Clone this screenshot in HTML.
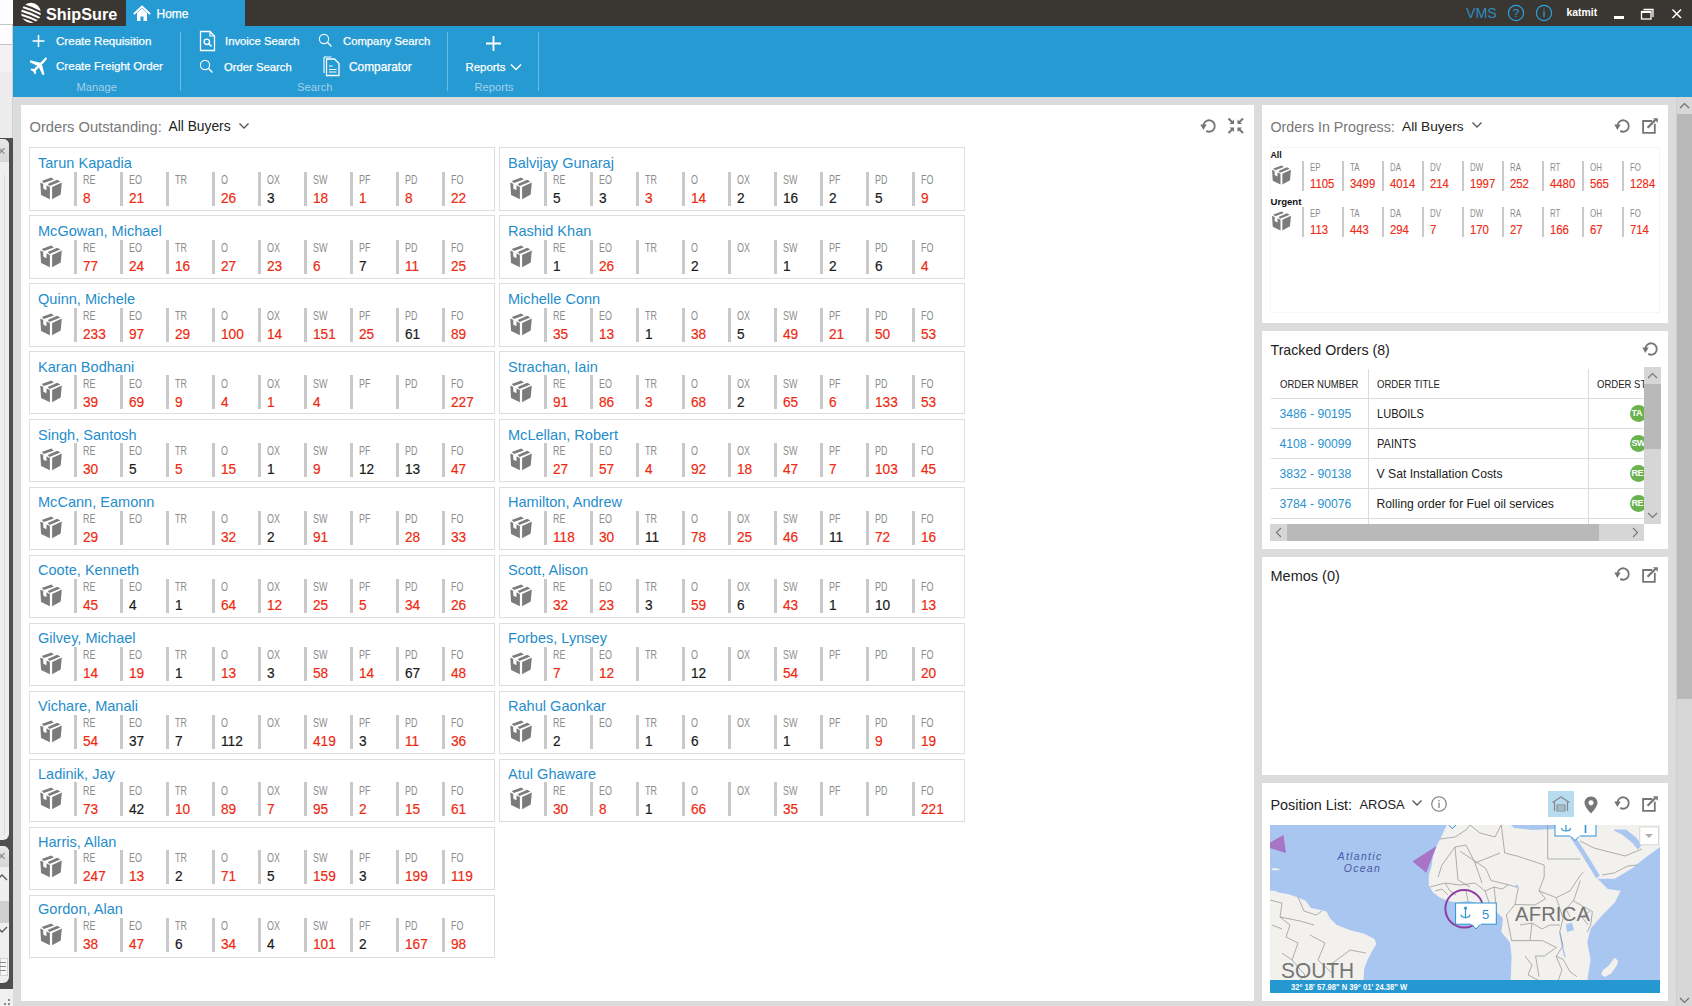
<!DOCTYPE html>
<html><head><meta charset="utf-8"><title>ShipSure</title>
<style>
html,body{margin:0;padding:0}
body{width:1692px;height:1006px;position:relative;overflow:hidden;background:#dcdcdc;font-family:"Liberation Sans", sans-serif}
.t{position:absolute;white-space:nowrap;line-height:1;transform-origin:0 0}
.r{position:absolute;display:block}
</style></head><body>
<div class="r" style="left:0px;top:0px;width:13px;height:1006px;background:#f0f0f0;"></div><div class="r" style="left:0px;top:0px;width:13px;height:24px;background:#fdfdfd;"></div><div class="r" style="left:0px;top:24px;width:13px;height:1px;background:#c4c4c4;"></div><div class="r" style="left:0px;top:25px;width:13px;height:19px;background:#fdfdfd;"></div><div class="r" style="left:0px;top:44px;width:13px;height:1px;background:#c4c4c4;"></div><div class="r" style="left:0px;top:45px;width:13px;height:27px;background:#f2f2f2;"></div><div class="r" style="left:0px;top:72px;width:13px;height:66px;background:#ececec;"></div><div class="r" style="left:12px;top:25px;width:1px;height:113px;background:#d0d0d0;"></div><div class="r" style="left:0px;top:138px;width:13px;height:851px;background:#4f4f4f;"></div><div class="r" style="left:0px;top:139px;width:9px;height:701px;background:#efefef;border-top-right-radius:6px;border-bottom-right-radius:6px"></div><div class="r" style="left:0px;top:139px;width:9px;height:23px;background:linear-gradient(#e9e9e9,#d6d6d6);border-top-right-radius:6px"></div><div class="t" style="left:-3px;top:146px;font-size:11px;color:#8a8a8a;line-height:11px">&#x2715;</div><div class="r" style="left:4px;top:175px;width:1px;height:660px;background:#d9d9d9;"></div><div class="r" style="left:0px;top:846px;width:9px;height:137px;background:#efefef;border-top-right-radius:6px;border-bottom-right-radius:6px"></div><div class="r" style="left:0px;top:846px;width:9px;height:21px;background:linear-gradient(#e9e9e9,#d6d6d6);border-top-right-radius:6px"></div><div class="t" style="left:-3px;top:851px;font-size:11px;color:#8a8a8a;line-height:11px">&#x2715;</div><svg class="r" style="left:0px;top:870px;" width="9" height="12" viewBox="0 0 9 12"><path d="M-3 10 L2 5 L7 10" stroke="#555" stroke-width="1.3" fill="none"/></svg><div class="r" style="left:0px;top:901px;width:9px;height:22px;background:#cfcfcf;"></div><svg class="r" style="left:0px;top:925px;" width="9" height="12" viewBox="0 0 9 12"><path d="M-3 2 L2 7 L7 2" stroke="#555" stroke-width="1.3" fill="none"/></svg><div class="r" style="left:0px;top:958px;width:8px;height:18px;background:#f7f7f7;border:1px solid #cfcfcf;box-sizing:border-box"></div><div class="r" style="left:0px;top:962px;width:6px;height:1px;background:#888;"></div><div class="r" style="left:0px;top:966px;width:6px;height:1px;background:#888;"></div><div class="r" style="left:0px;top:970px;width:6px;height:1px;background:#888;"></div><div class="r" style="left:13px;top:97px;width:8px;height:909px;background:#dcdcdc;"></div><div class="r" style="left:8px;top:1003px;width:2px;height:2px;background:#8a8a8a;"></div><div class="r" style="left:8px;top:999px;width:2px;height:2px;background:#8a8a8a;"></div><div class="r" style="left:4px;top:1003px;width:2px;height:2px;background:#8a8a8a;"></div><div class="r" style="left:13px;top:0px;width:1679px;height:26px;background:#3a3631;"></div><div class="r" style="left:126px;top:0px;width:119px;height:26px;background:#269ad3;"></div><div class="r" style="left:13px;top:26px;width:1679px;height:71px;background:#269ad3;"></div><svg class="r" style="left:20px;top:2px;" width="22" height="22" viewBox="0 0 22 22"><ellipse cx="11" cy="10.9" rx="9.9" ry="10.2" fill="#fff"/>
<g stroke="#3a3631" stroke-width="1.9" fill="none">
<path d="M0 1.9 Q11 5.0 22 10.7"/><path d="M0 6.1 Q11 9.2 22 14.9"/><path d="M0 10.3 Q11 13.4 22 19.1"/><path d="M0 14.5 Q11 17.6 22 23.3"/>
</g></svg><div class="t" style="left:45.5px;top:5.55px;font-size:17px;color:#fff;font-weight:700;transform:scaleX(0.955);">ShipSure</div><svg class="r" style="left:133px;top:4px;" width="18" height="18" viewBox="0 0 18 18"><path d="M1.5 9.5 L9 2.5 L16.5 9.5" stroke="#fff" stroke-width="2" fill="none" stroke-linecap="round"/><path d="M4 9 L9 4.5 L14 9 V17 H10.5 V12.5 H7.5 V17 H4 Z" fill="#fff"/></svg><div class="t" style="left:156.5px;top:7.80px;font-size:12px;color:#fff;font-weight:400;-webkit-text-stroke:0.25px #fff">Home</div><div class="t" style="left:1465.5px;top:5.92px;font-size:14.8px;color:#2aa3e0;font-weight:400;transform:scaleX(0.96);opacity:0.8">VMS</div><svg class="r" style="left:1507px;top:4px;" width="18" height="18" viewBox="0 0 18 18"><circle cx="9" cy="9" r="7.6" stroke="#2aa3e0" stroke-width="1.2" fill="none"/><text x="9" y="13.3" font-family="Liberation Sans" font-size="11.5" fill="#2aa3e0" text-anchor="middle">?</text></svg><svg class="r" style="left:1535px;top:4px;" width="18" height="18" viewBox="0 0 18 18"><circle cx="9" cy="9" r="7.6" stroke="#2aa3e0" stroke-width="1.2" fill="none"/><rect x="8.4" y="7.3" width="1.2" height="6" fill="#2aa3e0"/><rect x="8.4" y="4.8" width="1.2" height="1.3" fill="#2aa3e0"/></svg><div class="t" style="left:1566.5px;top:7.66px;font-size:10.4px;color:#fff;font-weight:700;">katmit</div><div class="r" style="left:1614px;top:16px;width:10px;height:3px;background:#fff;"></div><svg class="r" style="left:1640px;top:8px;" width="15" height="12" viewBox="0 0 15 12"><rect x="1.5" y="3.5" width="9.5" height="7.5" stroke="#fff" stroke-width="1.3" fill="none"/><path d="M3.5 1.5 H13 V9" stroke="#fff" stroke-width="1.3" fill="none"/><rect x="1.5" y="3.5" width="9.5" height="1.5" fill="#fff"/></svg><svg class="r" style="left:1671px;top:8px;" width="12" height="11" viewBox="0 0 12 11"><path d="M1.5 1.5 L10 10 M10 1.5 L1.5 10" stroke="#fff" stroke-width="1.5"/></svg><svg class="r" style="left:31px;top:34px;" width="15" height="14" viewBox="0 0 15 14"><path d="M7.5 1 V13 M1.5 7 H13.5" stroke="#fff" stroke-width="1.6"/></svg><div class="t" style="left:56px;top:35.74px;font-size:11.83px;color:#fff;font-weight:400;transform:scaleX(0.98);-webkit-text-stroke:0.25px #fff">Create Requisition</div><svg class="r" style="left:29px;top:56px;" width="20" height="20" viewBox="0 0 20 20"><path d="M17.5 1.5 C18.5 2.5 17 4.5 15.5 6 L13 8.5 L15.5 18.5 L13.5 19 L10 11.5 L6.8 14.7 L7.2 17.5 L5.8 18.3 L4.3 15.5 L1.5 14 L2.3 12.6 L5 13 L8.3 9.8 L0.8 6.3 L1.3 4.3 L11.3 6.8 L13.8 4.3 C15.3 2.8 16.8 0.8 17.5 1.5 Z" fill="#fff"/></svg><div class="t" style="left:56px;top:61.34px;font-size:11.83px;color:#fff;font-weight:400;transform:scaleX(0.98);-webkit-text-stroke:0.25px #fff">Create Freight Order</div><div class="t" style="left:76.5px;top:81.98px;font-size:11.2px;color:#a3d0ea;font-weight:400;">Manage</div><div class="r" style="left:180px;top:32px;width:1px;height:59px;background:rgba(255,255,255,0.32);"></div><svg class="r" style="left:199px;top:30px;" width="18" height="22" viewBox="0 0 18 22"><path d="M1.5 1.5 H11 L15.5 6 V20.5 H1.5 Z" stroke="#fff" stroke-width="1.3" fill="none"/><path d="M11 1.5 V6 H15.5" stroke="#fff" stroke-width="1.2" fill="none"/><circle cx="7.8" cy="11.8" r="2.7" stroke="#fff" stroke-width="1.4" fill="none"/><path d="M9.8 13.8 L12.5 16.5" stroke="#fff" stroke-width="1.6"/></svg><div class="t" style="left:224.5px;top:36.00px;font-size:11.53px;color:#fff;font-weight:400;transform:scaleX(0.98);-webkit-text-stroke:0.25px #fff">Invoice Search</div><svg class="r" style="left:199px;top:59px;" width="16" height="15" viewBox="0 0 16 15"><circle cx="6" cy="6" r="4.6" stroke="#fff" stroke-width="1.1" fill="none"/><path d="M9.3 9.3 L13.5 13.5" stroke="#fff" stroke-width="1.3"/></svg><div class="t" style="left:224px;top:62.00px;font-size:11.53px;color:#fff;font-weight:400;transform:scaleX(0.98);-webkit-text-stroke:0.25px #fff">Order Search</div><svg class="r" style="left:318px;top:33px;" width="16" height="15" viewBox="0 0 16 15"><circle cx="6" cy="6" r="4.6" stroke="#fff" stroke-width="1.1" fill="none"/><path d="M9.3 9.3 L13.5 13.5" stroke="#fff" stroke-width="1.3"/></svg><div class="t" style="left:343px;top:36.00px;font-size:11.53px;color:#fff;font-weight:400;transform:scaleX(0.98);-webkit-text-stroke:0.25px #fff">Company Search</div><svg class="r" style="left:322px;top:55px;" width="20" height="22" viewBox="0 0 20 22"><path d="M2 2 H9.5 M2 2 V18" stroke="#fff" stroke-width="1.1" fill="none"/><path d="M4.5 4 H12.5 L17 8.5 V20.5 H4.5 Z" stroke="#fff" stroke-width="1.3" fill="none"/><path d="M7 11 H10.5 M7 14.5 H14.5 M7 17 H14.5" stroke="#fff" stroke-width="1.1"/></svg><div class="t" style="left:349px;top:60.98px;font-size:12.14px;color:#fff;font-weight:400;transform:scaleX(0.98);-webkit-text-stroke:0.25px #fff">Comparator</div><div class="t" style="left:297px;top:81.98px;font-size:11.2px;color:#a3d0ea;font-weight:400;">Search</div><div class="r" style="left:447px;top:32px;width:1px;height:59px;background:rgba(255,255,255,0.32);"></div><svg class="r" style="left:485px;top:35px;" width="17" height="17" viewBox="0 0 17 17"><path d="M8.5 1 V16 M1 8.5 H16" stroke="#fff" stroke-width="1.8"/></svg><div class="t" style="left:465.5px;top:61.81px;font-size:11.4px;color:#fff;font-weight:400;-webkit-text-stroke:0.25px #fff">Reports</div><svg class="r" style="left:509px;top:62px;" width="14" height="10" viewBox="0 0 14 10"><path d="M2 2.5 L7 7.5 L12 2.5" stroke="#fff" stroke-width="1.5" fill="none"/></svg><div class="t" style="left:474.5px;top:81.98px;font-size:11.2px;color:#a3d0ea;font-weight:400;">Reports</div><div class="r" style="left:538px;top:32px;width:1px;height:59px;background:rgba(255,255,255,0.32);"></div><div class="r" style="left:1676px;top:97px;width:16px;height:909px;background:#d7d7d7;"></div><div class="r" style="left:1676px;top:97px;width:1px;height:909px;background:#cfcfcf;"></div><div class="r" style="left:1677px;top:114px;width:15px;height:585px;background:#b9b9b9;"></div><svg class="r" style="left:1677px;top:97px;" width="15" height="17" viewBox="0 0 15 17"><path d="M3 11 L7.5 6.5 L12 11" stroke="#6f6f6f" stroke-width="1.2" fill="none"/></svg><svg class="r" style="left:1677px;top:992px;" width="15" height="17" viewBox="0 0 15 17"><path d="M3 6 L7.5 10.5 L12 6" stroke="#6f6f6f" stroke-width="1.2" fill="none"/></svg><div class="r" style="left:21px;top:105px;width:1233px;height:896px;background:#fff;"></div><div class="t" style="left:29.5px;top:119.50px;font-size:14.7px;color:#777;font-weight:400;">Orders Outstanding:</div><div class="t" style="left:168.5px;top:120.27px;font-size:13.8px;color:#222;font-weight:400;">All Buyers</div><svg class="r" style="left:238.4px;top:122px;" width="12" height="8" viewBox="0 0 12 8"><path d="M1.5 1.5 L6 6 L10.5 1.5" stroke="#555" stroke-width="1.3" fill="none"/></svg><svg class="r" style="left:1200px;top:117.9px;" width="17" height="17" viewBox="0 0 17 17"><path d="M3.4 8 A5.7 5.7 0 1 1 6.25 12.94" stroke="#757575" stroke-width="1.9" fill="none"/><path d="M0.3 6.5 L6.7 6.5 L3.4 11.9 Z" fill="#757575"/></svg><svg class="r" style="left:1227px;top:117px;" width="18" height="18" viewBox="0 0 18 18"><g stroke="#757575" stroke-width="2" fill="none"><path d="M1.5 1.5 L6 6 M11.5 6 L16 1.5 M1.5 16 L6 11.5 M11.5 11.5 L16 16"/></g><g fill="#757575"><path d="M7 2.5 V7 H2.5 Z"/><path d="M10.5 2.5 V7 H15 Z"/><path d="M7 15 V10.5 H2.5 Z"/><path d="M10.5 15 V10.5 H15 Z"/></g></svg><div class="r" style="left:29px;top:147px;width:466px;height:64px;border:1px solid #dedede;box-sizing:border-box"></div><div class="t" style="left:38px;top:155.25px;font-size:15px;color:#1f8dcb;font-weight:400;transform:scaleX(0.97);">Tarun Kapadia</div><svg class="r" style="left:38px;top:176.0px;" width="26.0" height="26.0" viewBox="0 0 26.0 26.0"><g transform="scale(1.0)"><path d="M2.3 6.5 L11.9 11.0 L11.9 23.3 L3.1 18.9 Z" fill="#7b7b7b"/>
<path d="M14.1 11.0 L23.8 6.5 L22.7 18.6 L14.1 23.3 Z" fill="#7b7b7b"/>
<path d="M3.7 5.0 L13.3 1.6 L15.8 3.4 L5.9 7.0 Z" fill="#7b7b7b"/>
<path d="M9.7 8.0 L19.2 3.7 L22.4 5.5 L11.4 9.9 Z" fill="#7b7b7b"/>
<path d="M5.2 7.6 L8.5 9.2 L8.5 14.1 L6.8 13.4 L5.3 12.6 Z" fill="#fff"/></g></svg><div class="r" style="left:74px;top:172.0px;width:3px;height:34px;background:#c9c9c9;"></div><div class="t" style="left:83px;top:174.12px;font-size:12.8px;color:#8c8c8c;font-weight:400;transform:scaleX(0.7);">RE</div><div class="t" style="left:83px;top:190.08px;font-size:15.2px;color:#ee2a12;font-weight:400;transform:scaleX(0.9);-webkit-text-stroke:0.2px currentColor">8</div><div class="r" style="left:120px;top:172.0px;width:3px;height:34px;background:#c9c9c9;"></div><div class="t" style="left:129px;top:174.12px;font-size:12.8px;color:#8c8c8c;font-weight:400;transform:scaleX(0.7);">EO</div><div class="t" style="left:129px;top:190.08px;font-size:15.2px;color:#ee2a12;font-weight:400;transform:scaleX(0.9);-webkit-text-stroke:0.2px currentColor">21</div><div class="r" style="left:166px;top:172.0px;width:3px;height:34px;background:#c9c9c9;"></div><div class="t" style="left:175px;top:174.12px;font-size:12.8px;color:#8c8c8c;font-weight:400;transform:scaleX(0.7);">TR</div><div class="r" style="left:212px;top:172.0px;width:3px;height:34px;background:#c9c9c9;"></div><div class="t" style="left:221px;top:174.12px;font-size:12.8px;color:#8c8c8c;font-weight:400;transform:scaleX(0.7);">O</div><div class="t" style="left:221px;top:190.08px;font-size:15.2px;color:#ee2a12;font-weight:400;transform:scaleX(0.9);-webkit-text-stroke:0.2px currentColor">26</div><div class="r" style="left:258px;top:172.0px;width:3px;height:34px;background:#c9c9c9;"></div><div class="t" style="left:267px;top:174.12px;font-size:12.8px;color:#8c8c8c;font-weight:400;transform:scaleX(0.7);">OX</div><div class="t" style="left:267px;top:190.08px;font-size:15.2px;color:#1a1a1a;font-weight:400;transform:scaleX(0.9);-webkit-text-stroke:0.2px currentColor">3</div><div class="r" style="left:304px;top:172.0px;width:3px;height:34px;background:#c9c9c9;"></div><div class="t" style="left:313px;top:174.12px;font-size:12.8px;color:#8c8c8c;font-weight:400;transform:scaleX(0.7);">SW</div><div class="t" style="left:313px;top:190.08px;font-size:15.2px;color:#ee2a12;font-weight:400;transform:scaleX(0.9);-webkit-text-stroke:0.2px currentColor">18</div><div class="r" style="left:350px;top:172.0px;width:3px;height:34px;background:#c9c9c9;"></div><div class="t" style="left:359px;top:174.12px;font-size:12.8px;color:#8c8c8c;font-weight:400;transform:scaleX(0.7);">PF</div><div class="t" style="left:359px;top:190.08px;font-size:15.2px;color:#ee2a12;font-weight:400;transform:scaleX(0.9);-webkit-text-stroke:0.2px currentColor">1</div><div class="r" style="left:396px;top:172.0px;width:3px;height:34px;background:#c9c9c9;"></div><div class="t" style="left:405px;top:174.12px;font-size:12.8px;color:#8c8c8c;font-weight:400;transform:scaleX(0.7);">PD</div><div class="t" style="left:405px;top:190.08px;font-size:15.2px;color:#ee2a12;font-weight:400;transform:scaleX(0.9);-webkit-text-stroke:0.2px currentColor">8</div><div class="r" style="left:442px;top:172.0px;width:3px;height:34px;background:#c9c9c9;"></div><div class="t" style="left:451px;top:174.12px;font-size:12.8px;color:#8c8c8c;font-weight:400;transform:scaleX(0.7);">FO</div><div class="t" style="left:451px;top:190.08px;font-size:15.2px;color:#ee2a12;font-weight:400;transform:scaleX(0.9);-webkit-text-stroke:0.2px currentColor">22</div><div class="r" style="left:29px;top:215px;width:466px;height:64px;border:1px solid #dedede;box-sizing:border-box"></div><div class="t" style="left:38px;top:223.08px;font-size:15px;color:#1f8dcb;font-weight:400;transform:scaleX(0.97);">McGowan, Michael</div><svg class="r" style="left:38px;top:243.83px;" width="26.0" height="26.0" viewBox="0 0 26.0 26.0"><g transform="scale(1.0)"><path d="M2.3 6.5 L11.9 11.0 L11.9 23.3 L3.1 18.9 Z" fill="#7b7b7b"/>
<path d="M14.1 11.0 L23.8 6.5 L22.7 18.6 L14.1 23.3 Z" fill="#7b7b7b"/>
<path d="M3.7 5.0 L13.3 1.6 L15.8 3.4 L5.9 7.0 Z" fill="#7b7b7b"/>
<path d="M9.7 8.0 L19.2 3.7 L22.4 5.5 L11.4 9.9 Z" fill="#7b7b7b"/>
<path d="M5.2 7.6 L8.5 9.2 L8.5 14.1 L6.8 13.4 L5.3 12.6 Z" fill="#fff"/></g></svg><div class="r" style="left:74px;top:239.83px;width:3px;height:34px;background:#c9c9c9;"></div><div class="t" style="left:83px;top:241.95px;font-size:12.8px;color:#8c8c8c;font-weight:400;transform:scaleX(0.7);">RE</div><div class="t" style="left:83px;top:257.91px;font-size:15.2px;color:#ee2a12;font-weight:400;transform:scaleX(0.9);-webkit-text-stroke:0.2px currentColor">77</div><div class="r" style="left:120px;top:239.83px;width:3px;height:34px;background:#c9c9c9;"></div><div class="t" style="left:129px;top:241.95px;font-size:12.8px;color:#8c8c8c;font-weight:400;transform:scaleX(0.7);">EO</div><div class="t" style="left:129px;top:257.91px;font-size:15.2px;color:#ee2a12;font-weight:400;transform:scaleX(0.9);-webkit-text-stroke:0.2px currentColor">24</div><div class="r" style="left:166px;top:239.83px;width:3px;height:34px;background:#c9c9c9;"></div><div class="t" style="left:175px;top:241.95px;font-size:12.8px;color:#8c8c8c;font-weight:400;transform:scaleX(0.7);">TR</div><div class="t" style="left:175px;top:257.91px;font-size:15.2px;color:#ee2a12;font-weight:400;transform:scaleX(0.9);-webkit-text-stroke:0.2px currentColor">16</div><div class="r" style="left:212px;top:239.83px;width:3px;height:34px;background:#c9c9c9;"></div><div class="t" style="left:221px;top:241.95px;font-size:12.8px;color:#8c8c8c;font-weight:400;transform:scaleX(0.7);">O</div><div class="t" style="left:221px;top:257.91px;font-size:15.2px;color:#ee2a12;font-weight:400;transform:scaleX(0.9);-webkit-text-stroke:0.2px currentColor">27</div><div class="r" style="left:258px;top:239.83px;width:3px;height:34px;background:#c9c9c9;"></div><div class="t" style="left:267px;top:241.95px;font-size:12.8px;color:#8c8c8c;font-weight:400;transform:scaleX(0.7);">OX</div><div class="t" style="left:267px;top:257.91px;font-size:15.2px;color:#ee2a12;font-weight:400;transform:scaleX(0.9);-webkit-text-stroke:0.2px currentColor">23</div><div class="r" style="left:304px;top:239.83px;width:3px;height:34px;background:#c9c9c9;"></div><div class="t" style="left:313px;top:241.95px;font-size:12.8px;color:#8c8c8c;font-weight:400;transform:scaleX(0.7);">SW</div><div class="t" style="left:313px;top:257.91px;font-size:15.2px;color:#ee2a12;font-weight:400;transform:scaleX(0.9);-webkit-text-stroke:0.2px currentColor">6</div><div class="r" style="left:350px;top:239.83px;width:3px;height:34px;background:#c9c9c9;"></div><div class="t" style="left:359px;top:241.95px;font-size:12.8px;color:#8c8c8c;font-weight:400;transform:scaleX(0.7);">PF</div><div class="t" style="left:359px;top:257.91px;font-size:15.2px;color:#1a1a1a;font-weight:400;transform:scaleX(0.9);-webkit-text-stroke:0.2px currentColor">7</div><div class="r" style="left:396px;top:239.83px;width:3px;height:34px;background:#c9c9c9;"></div><div class="t" style="left:405px;top:241.95px;font-size:12.8px;color:#8c8c8c;font-weight:400;transform:scaleX(0.7);">PD</div><div class="t" style="left:405px;top:257.91px;font-size:15.2px;color:#ee2a12;font-weight:400;transform:scaleX(0.9);-webkit-text-stroke:0.2px currentColor">11</div><div class="r" style="left:442px;top:239.83px;width:3px;height:34px;background:#c9c9c9;"></div><div class="t" style="left:451px;top:241.95px;font-size:12.8px;color:#8c8c8c;font-weight:400;transform:scaleX(0.7);">FO</div><div class="t" style="left:451px;top:257.91px;font-size:15.2px;color:#ee2a12;font-weight:400;transform:scaleX(0.9);-webkit-text-stroke:0.2px currentColor">25</div><div class="r" style="left:29px;top:283px;width:466px;height:64px;border:1px solid #dedede;box-sizing:border-box"></div><div class="t" style="left:38px;top:290.91px;font-size:15px;color:#1f8dcb;font-weight:400;transform:scaleX(0.97);">Quinn, Michele</div><svg class="r" style="left:38px;top:311.66px;" width="26.0" height="26.0" viewBox="0 0 26.0 26.0"><g transform="scale(1.0)"><path d="M2.3 6.5 L11.9 11.0 L11.9 23.3 L3.1 18.9 Z" fill="#7b7b7b"/>
<path d="M14.1 11.0 L23.8 6.5 L22.7 18.6 L14.1 23.3 Z" fill="#7b7b7b"/>
<path d="M3.7 5.0 L13.3 1.6 L15.8 3.4 L5.9 7.0 Z" fill="#7b7b7b"/>
<path d="M9.7 8.0 L19.2 3.7 L22.4 5.5 L11.4 9.9 Z" fill="#7b7b7b"/>
<path d="M5.2 7.6 L8.5 9.2 L8.5 14.1 L6.8 13.4 L5.3 12.6 Z" fill="#fff"/></g></svg><div class="r" style="left:74px;top:307.66px;width:3px;height:34px;background:#c9c9c9;"></div><div class="t" style="left:83px;top:309.78px;font-size:12.8px;color:#8c8c8c;font-weight:400;transform:scaleX(0.7);">RE</div><div class="t" style="left:83px;top:325.74px;font-size:15.2px;color:#ee2a12;font-weight:400;transform:scaleX(0.9);-webkit-text-stroke:0.2px currentColor">233</div><div class="r" style="left:120px;top:307.66px;width:3px;height:34px;background:#c9c9c9;"></div><div class="t" style="left:129px;top:309.78px;font-size:12.8px;color:#8c8c8c;font-weight:400;transform:scaleX(0.7);">EO</div><div class="t" style="left:129px;top:325.74px;font-size:15.2px;color:#ee2a12;font-weight:400;transform:scaleX(0.9);-webkit-text-stroke:0.2px currentColor">97</div><div class="r" style="left:166px;top:307.66px;width:3px;height:34px;background:#c9c9c9;"></div><div class="t" style="left:175px;top:309.78px;font-size:12.8px;color:#8c8c8c;font-weight:400;transform:scaleX(0.7);">TR</div><div class="t" style="left:175px;top:325.74px;font-size:15.2px;color:#ee2a12;font-weight:400;transform:scaleX(0.9);-webkit-text-stroke:0.2px currentColor">29</div><div class="r" style="left:212px;top:307.66px;width:3px;height:34px;background:#c9c9c9;"></div><div class="t" style="left:221px;top:309.78px;font-size:12.8px;color:#8c8c8c;font-weight:400;transform:scaleX(0.7);">O</div><div class="t" style="left:221px;top:325.74px;font-size:15.2px;color:#ee2a12;font-weight:400;transform:scaleX(0.9);-webkit-text-stroke:0.2px currentColor">100</div><div class="r" style="left:258px;top:307.66px;width:3px;height:34px;background:#c9c9c9;"></div><div class="t" style="left:267px;top:309.78px;font-size:12.8px;color:#8c8c8c;font-weight:400;transform:scaleX(0.7);">OX</div><div class="t" style="left:267px;top:325.74px;font-size:15.2px;color:#ee2a12;font-weight:400;transform:scaleX(0.9);-webkit-text-stroke:0.2px currentColor">14</div><div class="r" style="left:304px;top:307.66px;width:3px;height:34px;background:#c9c9c9;"></div><div class="t" style="left:313px;top:309.78px;font-size:12.8px;color:#8c8c8c;font-weight:400;transform:scaleX(0.7);">SW</div><div class="t" style="left:313px;top:325.74px;font-size:15.2px;color:#ee2a12;font-weight:400;transform:scaleX(0.9);-webkit-text-stroke:0.2px currentColor">151</div><div class="r" style="left:350px;top:307.66px;width:3px;height:34px;background:#c9c9c9;"></div><div class="t" style="left:359px;top:309.78px;font-size:12.8px;color:#8c8c8c;font-weight:400;transform:scaleX(0.7);">PF</div><div class="t" style="left:359px;top:325.74px;font-size:15.2px;color:#ee2a12;font-weight:400;transform:scaleX(0.9);-webkit-text-stroke:0.2px currentColor">25</div><div class="r" style="left:396px;top:307.66px;width:3px;height:34px;background:#c9c9c9;"></div><div class="t" style="left:405px;top:309.78px;font-size:12.8px;color:#8c8c8c;font-weight:400;transform:scaleX(0.7);">PD</div><div class="t" style="left:405px;top:325.74px;font-size:15.2px;color:#1a1a1a;font-weight:400;transform:scaleX(0.9);-webkit-text-stroke:0.2px currentColor">61</div><div class="r" style="left:442px;top:307.66px;width:3px;height:34px;background:#c9c9c9;"></div><div class="t" style="left:451px;top:309.78px;font-size:12.8px;color:#8c8c8c;font-weight:400;transform:scaleX(0.7);">FO</div><div class="t" style="left:451px;top:325.74px;font-size:15.2px;color:#ee2a12;font-weight:400;transform:scaleX(0.9);-webkit-text-stroke:0.2px currentColor">89</div><div class="r" style="left:29px;top:351px;width:466px;height:63px;border:1px solid #dedede;box-sizing:border-box"></div><div class="t" style="left:38px;top:358.74px;font-size:15px;color:#1f8dcb;font-weight:400;transform:scaleX(0.97);">Karan Bodhani</div><svg class="r" style="left:38px;top:379.49px;" width="26.0" height="26.0" viewBox="0 0 26.0 26.0"><g transform="scale(1.0)"><path d="M2.3 6.5 L11.9 11.0 L11.9 23.3 L3.1 18.9 Z" fill="#7b7b7b"/>
<path d="M14.1 11.0 L23.8 6.5 L22.7 18.6 L14.1 23.3 Z" fill="#7b7b7b"/>
<path d="M3.7 5.0 L13.3 1.6 L15.8 3.4 L5.9 7.0 Z" fill="#7b7b7b"/>
<path d="M9.7 8.0 L19.2 3.7 L22.4 5.5 L11.4 9.9 Z" fill="#7b7b7b"/>
<path d="M5.2 7.6 L8.5 9.2 L8.5 14.1 L6.8 13.4 L5.3 12.6 Z" fill="#fff"/></g></svg><div class="r" style="left:74px;top:375.49px;width:3px;height:34px;background:#c9c9c9;"></div><div class="t" style="left:83px;top:377.61px;font-size:12.8px;color:#8c8c8c;font-weight:400;transform:scaleX(0.7);">RE</div><div class="t" style="left:83px;top:393.57px;font-size:15.2px;color:#ee2a12;font-weight:400;transform:scaleX(0.9);-webkit-text-stroke:0.2px currentColor">39</div><div class="r" style="left:120px;top:375.49px;width:3px;height:34px;background:#c9c9c9;"></div><div class="t" style="left:129px;top:377.61px;font-size:12.8px;color:#8c8c8c;font-weight:400;transform:scaleX(0.7);">EO</div><div class="t" style="left:129px;top:393.57px;font-size:15.2px;color:#ee2a12;font-weight:400;transform:scaleX(0.9);-webkit-text-stroke:0.2px currentColor">69</div><div class="r" style="left:166px;top:375.49px;width:3px;height:34px;background:#c9c9c9;"></div><div class="t" style="left:175px;top:377.61px;font-size:12.8px;color:#8c8c8c;font-weight:400;transform:scaleX(0.7);">TR</div><div class="t" style="left:175px;top:393.57px;font-size:15.2px;color:#ee2a12;font-weight:400;transform:scaleX(0.9);-webkit-text-stroke:0.2px currentColor">9</div><div class="r" style="left:212px;top:375.49px;width:3px;height:34px;background:#c9c9c9;"></div><div class="t" style="left:221px;top:377.61px;font-size:12.8px;color:#8c8c8c;font-weight:400;transform:scaleX(0.7);">O</div><div class="t" style="left:221px;top:393.57px;font-size:15.2px;color:#ee2a12;font-weight:400;transform:scaleX(0.9);-webkit-text-stroke:0.2px currentColor">4</div><div class="r" style="left:258px;top:375.49px;width:3px;height:34px;background:#c9c9c9;"></div><div class="t" style="left:267px;top:377.61px;font-size:12.8px;color:#8c8c8c;font-weight:400;transform:scaleX(0.7);">OX</div><div class="t" style="left:267px;top:393.57px;font-size:15.2px;color:#ee2a12;font-weight:400;transform:scaleX(0.9);-webkit-text-stroke:0.2px currentColor">1</div><div class="r" style="left:304px;top:375.49px;width:3px;height:34px;background:#c9c9c9;"></div><div class="t" style="left:313px;top:377.61px;font-size:12.8px;color:#8c8c8c;font-weight:400;transform:scaleX(0.7);">SW</div><div class="t" style="left:313px;top:393.57px;font-size:15.2px;color:#ee2a12;font-weight:400;transform:scaleX(0.9);-webkit-text-stroke:0.2px currentColor">4</div><div class="r" style="left:350px;top:375.49px;width:3px;height:34px;background:#c9c9c9;"></div><div class="t" style="left:359px;top:377.61px;font-size:12.8px;color:#8c8c8c;font-weight:400;transform:scaleX(0.7);">PF</div><div class="r" style="left:396px;top:375.49px;width:3px;height:34px;background:#c9c9c9;"></div><div class="t" style="left:405px;top:377.61px;font-size:12.8px;color:#8c8c8c;font-weight:400;transform:scaleX(0.7);">PD</div><div class="r" style="left:442px;top:375.49px;width:3px;height:34px;background:#c9c9c9;"></div><div class="t" style="left:451px;top:377.61px;font-size:12.8px;color:#8c8c8c;font-weight:400;transform:scaleX(0.7);">FO</div><div class="t" style="left:451px;top:393.57px;font-size:15.2px;color:#ee2a12;font-weight:400;transform:scaleX(0.9);-webkit-text-stroke:0.2px currentColor">227</div><div class="r" style="left:29px;top:419px;width:466px;height:63px;border:1px solid #dedede;box-sizing:border-box"></div><div class="t" style="left:38px;top:426.57px;font-size:15px;color:#1f8dcb;font-weight:400;transform:scaleX(0.97);">Singh, Santosh</div><svg class="r" style="left:38px;top:447.32px;" width="26.0" height="26.0" viewBox="0 0 26.0 26.0"><g transform="scale(1.0)"><path d="M2.3 6.5 L11.9 11.0 L11.9 23.3 L3.1 18.9 Z" fill="#7b7b7b"/>
<path d="M14.1 11.0 L23.8 6.5 L22.7 18.6 L14.1 23.3 Z" fill="#7b7b7b"/>
<path d="M3.7 5.0 L13.3 1.6 L15.8 3.4 L5.9 7.0 Z" fill="#7b7b7b"/>
<path d="M9.7 8.0 L19.2 3.7 L22.4 5.5 L11.4 9.9 Z" fill="#7b7b7b"/>
<path d="M5.2 7.6 L8.5 9.2 L8.5 14.1 L6.8 13.4 L5.3 12.6 Z" fill="#fff"/></g></svg><div class="r" style="left:74px;top:443.32px;width:3px;height:34px;background:#c9c9c9;"></div><div class="t" style="left:83px;top:445.44px;font-size:12.8px;color:#8c8c8c;font-weight:400;transform:scaleX(0.7);">RE</div><div class="t" style="left:83px;top:461.40px;font-size:15.2px;color:#ee2a12;font-weight:400;transform:scaleX(0.9);-webkit-text-stroke:0.2px currentColor">30</div><div class="r" style="left:120px;top:443.32px;width:3px;height:34px;background:#c9c9c9;"></div><div class="t" style="left:129px;top:445.44px;font-size:12.8px;color:#8c8c8c;font-weight:400;transform:scaleX(0.7);">EO</div><div class="t" style="left:129px;top:461.40px;font-size:15.2px;color:#1a1a1a;font-weight:400;transform:scaleX(0.9);-webkit-text-stroke:0.2px currentColor">5</div><div class="r" style="left:166px;top:443.32px;width:3px;height:34px;background:#c9c9c9;"></div><div class="t" style="left:175px;top:445.44px;font-size:12.8px;color:#8c8c8c;font-weight:400;transform:scaleX(0.7);">TR</div><div class="t" style="left:175px;top:461.40px;font-size:15.2px;color:#ee2a12;font-weight:400;transform:scaleX(0.9);-webkit-text-stroke:0.2px currentColor">5</div><div class="r" style="left:212px;top:443.32px;width:3px;height:34px;background:#c9c9c9;"></div><div class="t" style="left:221px;top:445.44px;font-size:12.8px;color:#8c8c8c;font-weight:400;transform:scaleX(0.7);">O</div><div class="t" style="left:221px;top:461.40px;font-size:15.2px;color:#ee2a12;font-weight:400;transform:scaleX(0.9);-webkit-text-stroke:0.2px currentColor">15</div><div class="r" style="left:258px;top:443.32px;width:3px;height:34px;background:#c9c9c9;"></div><div class="t" style="left:267px;top:445.44px;font-size:12.8px;color:#8c8c8c;font-weight:400;transform:scaleX(0.7);">OX</div><div class="t" style="left:267px;top:461.40px;font-size:15.2px;color:#1a1a1a;font-weight:400;transform:scaleX(0.9);-webkit-text-stroke:0.2px currentColor">1</div><div class="r" style="left:304px;top:443.32px;width:3px;height:34px;background:#c9c9c9;"></div><div class="t" style="left:313px;top:445.44px;font-size:12.8px;color:#8c8c8c;font-weight:400;transform:scaleX(0.7);">SW</div><div class="t" style="left:313px;top:461.40px;font-size:15.2px;color:#ee2a12;font-weight:400;transform:scaleX(0.9);-webkit-text-stroke:0.2px currentColor">9</div><div class="r" style="left:350px;top:443.32px;width:3px;height:34px;background:#c9c9c9;"></div><div class="t" style="left:359px;top:445.44px;font-size:12.8px;color:#8c8c8c;font-weight:400;transform:scaleX(0.7);">PF</div><div class="t" style="left:359px;top:461.40px;font-size:15.2px;color:#1a1a1a;font-weight:400;transform:scaleX(0.9);-webkit-text-stroke:0.2px currentColor">12</div><div class="r" style="left:396px;top:443.32px;width:3px;height:34px;background:#c9c9c9;"></div><div class="t" style="left:405px;top:445.44px;font-size:12.8px;color:#8c8c8c;font-weight:400;transform:scaleX(0.7);">PD</div><div class="t" style="left:405px;top:461.40px;font-size:15.2px;color:#1a1a1a;font-weight:400;transform:scaleX(0.9);-webkit-text-stroke:0.2px currentColor">13</div><div class="r" style="left:442px;top:443.32px;width:3px;height:34px;background:#c9c9c9;"></div><div class="t" style="left:451px;top:445.44px;font-size:12.8px;color:#8c8c8c;font-weight:400;transform:scaleX(0.7);">FO</div><div class="t" style="left:451px;top:461.40px;font-size:15.2px;color:#ee2a12;font-weight:400;transform:scaleX(0.9);-webkit-text-stroke:0.2px currentColor">47</div><div class="r" style="left:29px;top:487px;width:466px;height:63px;border:1px solid #dedede;box-sizing:border-box"></div><div class="t" style="left:38px;top:494.40px;font-size:15px;color:#1f8dcb;font-weight:400;transform:scaleX(0.97);">McCann, Eamonn</div><svg class="r" style="left:38px;top:515.15px;" width="26.0" height="26.0" viewBox="0 0 26.0 26.0"><g transform="scale(1.0)"><path d="M2.3 6.5 L11.9 11.0 L11.9 23.3 L3.1 18.9 Z" fill="#7b7b7b"/>
<path d="M14.1 11.0 L23.8 6.5 L22.7 18.6 L14.1 23.3 Z" fill="#7b7b7b"/>
<path d="M3.7 5.0 L13.3 1.6 L15.8 3.4 L5.9 7.0 Z" fill="#7b7b7b"/>
<path d="M9.7 8.0 L19.2 3.7 L22.4 5.5 L11.4 9.9 Z" fill="#7b7b7b"/>
<path d="M5.2 7.6 L8.5 9.2 L8.5 14.1 L6.8 13.4 L5.3 12.6 Z" fill="#fff"/></g></svg><div class="r" style="left:74px;top:511.15px;width:3px;height:34px;background:#c9c9c9;"></div><div class="t" style="left:83px;top:513.27px;font-size:12.8px;color:#8c8c8c;font-weight:400;transform:scaleX(0.7);">RE</div><div class="t" style="left:83px;top:529.23px;font-size:15.2px;color:#ee2a12;font-weight:400;transform:scaleX(0.9);-webkit-text-stroke:0.2px currentColor">29</div><div class="r" style="left:120px;top:511.15px;width:3px;height:34px;background:#c9c9c9;"></div><div class="t" style="left:129px;top:513.27px;font-size:12.8px;color:#8c8c8c;font-weight:400;transform:scaleX(0.7);">EO</div><div class="r" style="left:166px;top:511.15px;width:3px;height:34px;background:#c9c9c9;"></div><div class="t" style="left:175px;top:513.27px;font-size:12.8px;color:#8c8c8c;font-weight:400;transform:scaleX(0.7);">TR</div><div class="r" style="left:212px;top:511.15px;width:3px;height:34px;background:#c9c9c9;"></div><div class="t" style="left:221px;top:513.27px;font-size:12.8px;color:#8c8c8c;font-weight:400;transform:scaleX(0.7);">O</div><div class="t" style="left:221px;top:529.23px;font-size:15.2px;color:#ee2a12;font-weight:400;transform:scaleX(0.9);-webkit-text-stroke:0.2px currentColor">32</div><div class="r" style="left:258px;top:511.15px;width:3px;height:34px;background:#c9c9c9;"></div><div class="t" style="left:267px;top:513.27px;font-size:12.8px;color:#8c8c8c;font-weight:400;transform:scaleX(0.7);">OX</div><div class="t" style="left:267px;top:529.23px;font-size:15.2px;color:#1a1a1a;font-weight:400;transform:scaleX(0.9);-webkit-text-stroke:0.2px currentColor">2</div><div class="r" style="left:304px;top:511.15px;width:3px;height:34px;background:#c9c9c9;"></div><div class="t" style="left:313px;top:513.27px;font-size:12.8px;color:#8c8c8c;font-weight:400;transform:scaleX(0.7);">SW</div><div class="t" style="left:313px;top:529.23px;font-size:15.2px;color:#ee2a12;font-weight:400;transform:scaleX(0.9);-webkit-text-stroke:0.2px currentColor">91</div><div class="r" style="left:350px;top:511.15px;width:3px;height:34px;background:#c9c9c9;"></div><div class="t" style="left:359px;top:513.27px;font-size:12.8px;color:#8c8c8c;font-weight:400;transform:scaleX(0.7);">PF</div><div class="r" style="left:396px;top:511.15px;width:3px;height:34px;background:#c9c9c9;"></div><div class="t" style="left:405px;top:513.27px;font-size:12.8px;color:#8c8c8c;font-weight:400;transform:scaleX(0.7);">PD</div><div class="t" style="left:405px;top:529.23px;font-size:15.2px;color:#ee2a12;font-weight:400;transform:scaleX(0.9);-webkit-text-stroke:0.2px currentColor">28</div><div class="r" style="left:442px;top:511.15px;width:3px;height:34px;background:#c9c9c9;"></div><div class="t" style="left:451px;top:513.27px;font-size:12.8px;color:#8c8c8c;font-weight:400;transform:scaleX(0.7);">FO</div><div class="t" style="left:451px;top:529.23px;font-size:15.2px;color:#ee2a12;font-weight:400;transform:scaleX(0.9);-webkit-text-stroke:0.2px currentColor">33</div><div class="r" style="left:29px;top:555px;width:466px;height:63px;border:1px solid #dedede;box-sizing:border-box"></div><div class="t" style="left:38px;top:562.23px;font-size:15px;color:#1f8dcb;font-weight:400;transform:scaleX(0.97);">Coote, Kenneth</div><svg class="r" style="left:38px;top:582.98px;" width="26.0" height="26.0" viewBox="0 0 26.0 26.0"><g transform="scale(1.0)"><path d="M2.3 6.5 L11.9 11.0 L11.9 23.3 L3.1 18.9 Z" fill="#7b7b7b"/>
<path d="M14.1 11.0 L23.8 6.5 L22.7 18.6 L14.1 23.3 Z" fill="#7b7b7b"/>
<path d="M3.7 5.0 L13.3 1.6 L15.8 3.4 L5.9 7.0 Z" fill="#7b7b7b"/>
<path d="M9.7 8.0 L19.2 3.7 L22.4 5.5 L11.4 9.9 Z" fill="#7b7b7b"/>
<path d="M5.2 7.6 L8.5 9.2 L8.5 14.1 L6.8 13.4 L5.3 12.6 Z" fill="#fff"/></g></svg><div class="r" style="left:74px;top:578.98px;width:3px;height:34px;background:#c9c9c9;"></div><div class="t" style="left:83px;top:581.10px;font-size:12.8px;color:#8c8c8c;font-weight:400;transform:scaleX(0.7);">RE</div><div class="t" style="left:83px;top:597.06px;font-size:15.2px;color:#ee2a12;font-weight:400;transform:scaleX(0.9);-webkit-text-stroke:0.2px currentColor">45</div><div class="r" style="left:120px;top:578.98px;width:3px;height:34px;background:#c9c9c9;"></div><div class="t" style="left:129px;top:581.10px;font-size:12.8px;color:#8c8c8c;font-weight:400;transform:scaleX(0.7);">EO</div><div class="t" style="left:129px;top:597.06px;font-size:15.2px;color:#1a1a1a;font-weight:400;transform:scaleX(0.9);-webkit-text-stroke:0.2px currentColor">4</div><div class="r" style="left:166px;top:578.98px;width:3px;height:34px;background:#c9c9c9;"></div><div class="t" style="left:175px;top:581.10px;font-size:12.8px;color:#8c8c8c;font-weight:400;transform:scaleX(0.7);">TR</div><div class="t" style="left:175px;top:597.06px;font-size:15.2px;color:#1a1a1a;font-weight:400;transform:scaleX(0.9);-webkit-text-stroke:0.2px currentColor">1</div><div class="r" style="left:212px;top:578.98px;width:3px;height:34px;background:#c9c9c9;"></div><div class="t" style="left:221px;top:581.10px;font-size:12.8px;color:#8c8c8c;font-weight:400;transform:scaleX(0.7);">O</div><div class="t" style="left:221px;top:597.06px;font-size:15.2px;color:#ee2a12;font-weight:400;transform:scaleX(0.9);-webkit-text-stroke:0.2px currentColor">64</div><div class="r" style="left:258px;top:578.98px;width:3px;height:34px;background:#c9c9c9;"></div><div class="t" style="left:267px;top:581.10px;font-size:12.8px;color:#8c8c8c;font-weight:400;transform:scaleX(0.7);">OX</div><div class="t" style="left:267px;top:597.06px;font-size:15.2px;color:#ee2a12;font-weight:400;transform:scaleX(0.9);-webkit-text-stroke:0.2px currentColor">12</div><div class="r" style="left:304px;top:578.98px;width:3px;height:34px;background:#c9c9c9;"></div><div class="t" style="left:313px;top:581.10px;font-size:12.8px;color:#8c8c8c;font-weight:400;transform:scaleX(0.7);">SW</div><div class="t" style="left:313px;top:597.06px;font-size:15.2px;color:#ee2a12;font-weight:400;transform:scaleX(0.9);-webkit-text-stroke:0.2px currentColor">25</div><div class="r" style="left:350px;top:578.98px;width:3px;height:34px;background:#c9c9c9;"></div><div class="t" style="left:359px;top:581.10px;font-size:12.8px;color:#8c8c8c;font-weight:400;transform:scaleX(0.7);">PF</div><div class="t" style="left:359px;top:597.06px;font-size:15.2px;color:#ee2a12;font-weight:400;transform:scaleX(0.9);-webkit-text-stroke:0.2px currentColor">5</div><div class="r" style="left:396px;top:578.98px;width:3px;height:34px;background:#c9c9c9;"></div><div class="t" style="left:405px;top:581.10px;font-size:12.8px;color:#8c8c8c;font-weight:400;transform:scaleX(0.7);">PD</div><div class="t" style="left:405px;top:597.06px;font-size:15.2px;color:#ee2a12;font-weight:400;transform:scaleX(0.9);-webkit-text-stroke:0.2px currentColor">34</div><div class="r" style="left:442px;top:578.98px;width:3px;height:34px;background:#c9c9c9;"></div><div class="t" style="left:451px;top:581.10px;font-size:12.8px;color:#8c8c8c;font-weight:400;transform:scaleX(0.7);">FO</div><div class="t" style="left:451px;top:597.06px;font-size:15.2px;color:#ee2a12;font-weight:400;transform:scaleX(0.9);-webkit-text-stroke:0.2px currentColor">26</div><div class="r" style="left:29px;top:623px;width:466px;height:63px;border:1px solid #dedede;box-sizing:border-box"></div><div class="t" style="left:38px;top:630.06px;font-size:15px;color:#1f8dcb;font-weight:400;transform:scaleX(0.97);">Gilvey, Michael</div><svg class="r" style="left:38px;top:650.81px;" width="26.0" height="26.0" viewBox="0 0 26.0 26.0"><g transform="scale(1.0)"><path d="M2.3 6.5 L11.9 11.0 L11.9 23.3 L3.1 18.9 Z" fill="#7b7b7b"/>
<path d="M14.1 11.0 L23.8 6.5 L22.7 18.6 L14.1 23.3 Z" fill="#7b7b7b"/>
<path d="M3.7 5.0 L13.3 1.6 L15.8 3.4 L5.9 7.0 Z" fill="#7b7b7b"/>
<path d="M9.7 8.0 L19.2 3.7 L22.4 5.5 L11.4 9.9 Z" fill="#7b7b7b"/>
<path d="M5.2 7.6 L8.5 9.2 L8.5 14.1 L6.8 13.4 L5.3 12.6 Z" fill="#fff"/></g></svg><div class="r" style="left:74px;top:646.81px;width:3px;height:34px;background:#c9c9c9;"></div><div class="t" style="left:83px;top:648.93px;font-size:12.8px;color:#8c8c8c;font-weight:400;transform:scaleX(0.7);">RE</div><div class="t" style="left:83px;top:664.89px;font-size:15.2px;color:#ee2a12;font-weight:400;transform:scaleX(0.9);-webkit-text-stroke:0.2px currentColor">14</div><div class="r" style="left:120px;top:646.81px;width:3px;height:34px;background:#c9c9c9;"></div><div class="t" style="left:129px;top:648.93px;font-size:12.8px;color:#8c8c8c;font-weight:400;transform:scaleX(0.7);">EO</div><div class="t" style="left:129px;top:664.89px;font-size:15.2px;color:#ee2a12;font-weight:400;transform:scaleX(0.9);-webkit-text-stroke:0.2px currentColor">19</div><div class="r" style="left:166px;top:646.81px;width:3px;height:34px;background:#c9c9c9;"></div><div class="t" style="left:175px;top:648.93px;font-size:12.8px;color:#8c8c8c;font-weight:400;transform:scaleX(0.7);">TR</div><div class="t" style="left:175px;top:664.89px;font-size:15.2px;color:#1a1a1a;font-weight:400;transform:scaleX(0.9);-webkit-text-stroke:0.2px currentColor">1</div><div class="r" style="left:212px;top:646.81px;width:3px;height:34px;background:#c9c9c9;"></div><div class="t" style="left:221px;top:648.93px;font-size:12.8px;color:#8c8c8c;font-weight:400;transform:scaleX(0.7);">O</div><div class="t" style="left:221px;top:664.89px;font-size:15.2px;color:#ee2a12;font-weight:400;transform:scaleX(0.9);-webkit-text-stroke:0.2px currentColor">13</div><div class="r" style="left:258px;top:646.81px;width:3px;height:34px;background:#c9c9c9;"></div><div class="t" style="left:267px;top:648.93px;font-size:12.8px;color:#8c8c8c;font-weight:400;transform:scaleX(0.7);">OX</div><div class="t" style="left:267px;top:664.89px;font-size:15.2px;color:#1a1a1a;font-weight:400;transform:scaleX(0.9);-webkit-text-stroke:0.2px currentColor">3</div><div class="r" style="left:304px;top:646.81px;width:3px;height:34px;background:#c9c9c9;"></div><div class="t" style="left:313px;top:648.93px;font-size:12.8px;color:#8c8c8c;font-weight:400;transform:scaleX(0.7);">SW</div><div class="t" style="left:313px;top:664.89px;font-size:15.2px;color:#ee2a12;font-weight:400;transform:scaleX(0.9);-webkit-text-stroke:0.2px currentColor">58</div><div class="r" style="left:350px;top:646.81px;width:3px;height:34px;background:#c9c9c9;"></div><div class="t" style="left:359px;top:648.93px;font-size:12.8px;color:#8c8c8c;font-weight:400;transform:scaleX(0.7);">PF</div><div class="t" style="left:359px;top:664.89px;font-size:15.2px;color:#ee2a12;font-weight:400;transform:scaleX(0.9);-webkit-text-stroke:0.2px currentColor">14</div><div class="r" style="left:396px;top:646.81px;width:3px;height:34px;background:#c9c9c9;"></div><div class="t" style="left:405px;top:648.93px;font-size:12.8px;color:#8c8c8c;font-weight:400;transform:scaleX(0.7);">PD</div><div class="t" style="left:405px;top:664.89px;font-size:15.2px;color:#1a1a1a;font-weight:400;transform:scaleX(0.9);-webkit-text-stroke:0.2px currentColor">67</div><div class="r" style="left:442px;top:646.81px;width:3px;height:34px;background:#c9c9c9;"></div><div class="t" style="left:451px;top:648.93px;font-size:12.8px;color:#8c8c8c;font-weight:400;transform:scaleX(0.7);">FO</div><div class="t" style="left:451px;top:664.89px;font-size:15.2px;color:#ee2a12;font-weight:400;transform:scaleX(0.9);-webkit-text-stroke:0.2px currentColor">48</div><div class="r" style="left:29px;top:691px;width:466px;height:63px;border:1px solid #dedede;box-sizing:border-box"></div><div class="t" style="left:38px;top:697.89px;font-size:15px;color:#1f8dcb;font-weight:400;transform:scaleX(0.97);">Vichare, Manali</div><svg class="r" style="left:38px;top:718.64px;" width="26.0" height="26.0" viewBox="0 0 26.0 26.0"><g transform="scale(1.0)"><path d="M2.3 6.5 L11.9 11.0 L11.9 23.3 L3.1 18.9 Z" fill="#7b7b7b"/>
<path d="M14.1 11.0 L23.8 6.5 L22.7 18.6 L14.1 23.3 Z" fill="#7b7b7b"/>
<path d="M3.7 5.0 L13.3 1.6 L15.8 3.4 L5.9 7.0 Z" fill="#7b7b7b"/>
<path d="M9.7 8.0 L19.2 3.7 L22.4 5.5 L11.4 9.9 Z" fill="#7b7b7b"/>
<path d="M5.2 7.6 L8.5 9.2 L8.5 14.1 L6.8 13.4 L5.3 12.6 Z" fill="#fff"/></g></svg><div class="r" style="left:74px;top:714.64px;width:3px;height:34px;background:#c9c9c9;"></div><div class="t" style="left:83px;top:716.76px;font-size:12.8px;color:#8c8c8c;font-weight:400;transform:scaleX(0.7);">RE</div><div class="t" style="left:83px;top:732.72px;font-size:15.2px;color:#ee2a12;font-weight:400;transform:scaleX(0.9);-webkit-text-stroke:0.2px currentColor">54</div><div class="r" style="left:120px;top:714.64px;width:3px;height:34px;background:#c9c9c9;"></div><div class="t" style="left:129px;top:716.76px;font-size:12.8px;color:#8c8c8c;font-weight:400;transform:scaleX(0.7);">EO</div><div class="t" style="left:129px;top:732.72px;font-size:15.2px;color:#1a1a1a;font-weight:400;transform:scaleX(0.9);-webkit-text-stroke:0.2px currentColor">37</div><div class="r" style="left:166px;top:714.64px;width:3px;height:34px;background:#c9c9c9;"></div><div class="t" style="left:175px;top:716.76px;font-size:12.8px;color:#8c8c8c;font-weight:400;transform:scaleX(0.7);">TR</div><div class="t" style="left:175px;top:732.72px;font-size:15.2px;color:#1a1a1a;font-weight:400;transform:scaleX(0.9);-webkit-text-stroke:0.2px currentColor">7</div><div class="r" style="left:212px;top:714.64px;width:3px;height:34px;background:#c9c9c9;"></div><div class="t" style="left:221px;top:716.76px;font-size:12.8px;color:#8c8c8c;font-weight:400;transform:scaleX(0.7);">O</div><div class="t" style="left:221px;top:732.72px;font-size:15.2px;color:#1a1a1a;font-weight:400;transform:scaleX(0.9);-webkit-text-stroke:0.2px currentColor">112</div><div class="r" style="left:258px;top:714.64px;width:3px;height:34px;background:#c9c9c9;"></div><div class="t" style="left:267px;top:716.76px;font-size:12.8px;color:#8c8c8c;font-weight:400;transform:scaleX(0.7);">OX</div><div class="r" style="left:304px;top:714.64px;width:3px;height:34px;background:#c9c9c9;"></div><div class="t" style="left:313px;top:716.76px;font-size:12.8px;color:#8c8c8c;font-weight:400;transform:scaleX(0.7);">SW</div><div class="t" style="left:313px;top:732.72px;font-size:15.2px;color:#ee2a12;font-weight:400;transform:scaleX(0.9);-webkit-text-stroke:0.2px currentColor">419</div><div class="r" style="left:350px;top:714.64px;width:3px;height:34px;background:#c9c9c9;"></div><div class="t" style="left:359px;top:716.76px;font-size:12.8px;color:#8c8c8c;font-weight:400;transform:scaleX(0.7);">PF</div><div class="t" style="left:359px;top:732.72px;font-size:15.2px;color:#1a1a1a;font-weight:400;transform:scaleX(0.9);-webkit-text-stroke:0.2px currentColor">3</div><div class="r" style="left:396px;top:714.64px;width:3px;height:34px;background:#c9c9c9;"></div><div class="t" style="left:405px;top:716.76px;font-size:12.8px;color:#8c8c8c;font-weight:400;transform:scaleX(0.7);">PD</div><div class="t" style="left:405px;top:732.72px;font-size:15.2px;color:#ee2a12;font-weight:400;transform:scaleX(0.9);-webkit-text-stroke:0.2px currentColor">11</div><div class="r" style="left:442px;top:714.64px;width:3px;height:34px;background:#c9c9c9;"></div><div class="t" style="left:451px;top:716.76px;font-size:12.8px;color:#8c8c8c;font-weight:400;transform:scaleX(0.7);">FO</div><div class="t" style="left:451px;top:732.72px;font-size:15.2px;color:#ee2a12;font-weight:400;transform:scaleX(0.9);-webkit-text-stroke:0.2px currentColor">36</div><div class="r" style="left:29px;top:759px;width:466px;height:63px;border:1px solid #dedede;box-sizing:border-box"></div><div class="t" style="left:38px;top:765.72px;font-size:15px;color:#1f8dcb;font-weight:400;transform:scaleX(0.97);">Ladinik, Jay</div><svg class="r" style="left:38px;top:786.47px;" width="26.0" height="26.0" viewBox="0 0 26.0 26.0"><g transform="scale(1.0)"><path d="M2.3 6.5 L11.9 11.0 L11.9 23.3 L3.1 18.9 Z" fill="#7b7b7b"/>
<path d="M14.1 11.0 L23.8 6.5 L22.7 18.6 L14.1 23.3 Z" fill="#7b7b7b"/>
<path d="M3.7 5.0 L13.3 1.6 L15.8 3.4 L5.9 7.0 Z" fill="#7b7b7b"/>
<path d="M9.7 8.0 L19.2 3.7 L22.4 5.5 L11.4 9.9 Z" fill="#7b7b7b"/>
<path d="M5.2 7.6 L8.5 9.2 L8.5 14.1 L6.8 13.4 L5.3 12.6 Z" fill="#fff"/></g></svg><div class="r" style="left:74px;top:782.47px;width:3px;height:34px;background:#c9c9c9;"></div><div class="t" style="left:83px;top:784.59px;font-size:12.8px;color:#8c8c8c;font-weight:400;transform:scaleX(0.7);">RE</div><div class="t" style="left:83px;top:800.55px;font-size:15.2px;color:#ee2a12;font-weight:400;transform:scaleX(0.9);-webkit-text-stroke:0.2px currentColor">73</div><div class="r" style="left:120px;top:782.47px;width:3px;height:34px;background:#c9c9c9;"></div><div class="t" style="left:129px;top:784.59px;font-size:12.8px;color:#8c8c8c;font-weight:400;transform:scaleX(0.7);">EO</div><div class="t" style="left:129px;top:800.55px;font-size:15.2px;color:#1a1a1a;font-weight:400;transform:scaleX(0.9);-webkit-text-stroke:0.2px currentColor">42</div><div class="r" style="left:166px;top:782.47px;width:3px;height:34px;background:#c9c9c9;"></div><div class="t" style="left:175px;top:784.59px;font-size:12.8px;color:#8c8c8c;font-weight:400;transform:scaleX(0.7);">TR</div><div class="t" style="left:175px;top:800.55px;font-size:15.2px;color:#ee2a12;font-weight:400;transform:scaleX(0.9);-webkit-text-stroke:0.2px currentColor">10</div><div class="r" style="left:212px;top:782.47px;width:3px;height:34px;background:#c9c9c9;"></div><div class="t" style="left:221px;top:784.59px;font-size:12.8px;color:#8c8c8c;font-weight:400;transform:scaleX(0.7);">O</div><div class="t" style="left:221px;top:800.55px;font-size:15.2px;color:#ee2a12;font-weight:400;transform:scaleX(0.9);-webkit-text-stroke:0.2px currentColor">89</div><div class="r" style="left:258px;top:782.47px;width:3px;height:34px;background:#c9c9c9;"></div><div class="t" style="left:267px;top:784.59px;font-size:12.8px;color:#8c8c8c;font-weight:400;transform:scaleX(0.7);">OX</div><div class="t" style="left:267px;top:800.55px;font-size:15.2px;color:#ee2a12;font-weight:400;transform:scaleX(0.9);-webkit-text-stroke:0.2px currentColor">7</div><div class="r" style="left:304px;top:782.47px;width:3px;height:34px;background:#c9c9c9;"></div><div class="t" style="left:313px;top:784.59px;font-size:12.8px;color:#8c8c8c;font-weight:400;transform:scaleX(0.7);">SW</div><div class="t" style="left:313px;top:800.55px;font-size:15.2px;color:#ee2a12;font-weight:400;transform:scaleX(0.9);-webkit-text-stroke:0.2px currentColor">95</div><div class="r" style="left:350px;top:782.47px;width:3px;height:34px;background:#c9c9c9;"></div><div class="t" style="left:359px;top:784.59px;font-size:12.8px;color:#8c8c8c;font-weight:400;transform:scaleX(0.7);">PF</div><div class="t" style="left:359px;top:800.55px;font-size:15.2px;color:#ee2a12;font-weight:400;transform:scaleX(0.9);-webkit-text-stroke:0.2px currentColor">2</div><div class="r" style="left:396px;top:782.47px;width:3px;height:34px;background:#c9c9c9;"></div><div class="t" style="left:405px;top:784.59px;font-size:12.8px;color:#8c8c8c;font-weight:400;transform:scaleX(0.7);">PD</div><div class="t" style="left:405px;top:800.55px;font-size:15.2px;color:#ee2a12;font-weight:400;transform:scaleX(0.9);-webkit-text-stroke:0.2px currentColor">15</div><div class="r" style="left:442px;top:782.47px;width:3px;height:34px;background:#c9c9c9;"></div><div class="t" style="left:451px;top:784.59px;font-size:12.8px;color:#8c8c8c;font-weight:400;transform:scaleX(0.7);">FO</div><div class="t" style="left:451px;top:800.55px;font-size:15.2px;color:#ee2a12;font-weight:400;transform:scaleX(0.9);-webkit-text-stroke:0.2px currentColor">61</div><div class="r" style="left:29px;top:827px;width:466px;height:63px;border:1px solid #dedede;box-sizing:border-box"></div><div class="t" style="left:38px;top:833.55px;font-size:15px;color:#1f8dcb;font-weight:400;transform:scaleX(0.97);">Harris, Allan</div><svg class="r" style="left:38px;top:854.3px;" width="26.0" height="26.0" viewBox="0 0 26.0 26.0"><g transform="scale(1.0)"><path d="M2.3 6.5 L11.9 11.0 L11.9 23.3 L3.1 18.9 Z" fill="#7b7b7b"/>
<path d="M14.1 11.0 L23.8 6.5 L22.7 18.6 L14.1 23.3 Z" fill="#7b7b7b"/>
<path d="M3.7 5.0 L13.3 1.6 L15.8 3.4 L5.9 7.0 Z" fill="#7b7b7b"/>
<path d="M9.7 8.0 L19.2 3.7 L22.4 5.5 L11.4 9.9 Z" fill="#7b7b7b"/>
<path d="M5.2 7.6 L8.5 9.2 L8.5 14.1 L6.8 13.4 L5.3 12.6 Z" fill="#fff"/></g></svg><div class="r" style="left:74px;top:850.3px;width:3px;height:34px;background:#c9c9c9;"></div><div class="t" style="left:83px;top:852.42px;font-size:12.8px;color:#8c8c8c;font-weight:400;transform:scaleX(0.7);">RE</div><div class="t" style="left:83px;top:868.38px;font-size:15.2px;color:#ee2a12;font-weight:400;transform:scaleX(0.9);-webkit-text-stroke:0.2px currentColor">247</div><div class="r" style="left:120px;top:850.3px;width:3px;height:34px;background:#c9c9c9;"></div><div class="t" style="left:129px;top:852.42px;font-size:12.8px;color:#8c8c8c;font-weight:400;transform:scaleX(0.7);">EO</div><div class="t" style="left:129px;top:868.38px;font-size:15.2px;color:#ee2a12;font-weight:400;transform:scaleX(0.9);-webkit-text-stroke:0.2px currentColor">13</div><div class="r" style="left:166px;top:850.3px;width:3px;height:34px;background:#c9c9c9;"></div><div class="t" style="left:175px;top:852.42px;font-size:12.8px;color:#8c8c8c;font-weight:400;transform:scaleX(0.7);">TR</div><div class="t" style="left:175px;top:868.38px;font-size:15.2px;color:#1a1a1a;font-weight:400;transform:scaleX(0.9);-webkit-text-stroke:0.2px currentColor">2</div><div class="r" style="left:212px;top:850.3px;width:3px;height:34px;background:#c9c9c9;"></div><div class="t" style="left:221px;top:852.42px;font-size:12.8px;color:#8c8c8c;font-weight:400;transform:scaleX(0.7);">O</div><div class="t" style="left:221px;top:868.38px;font-size:15.2px;color:#ee2a12;font-weight:400;transform:scaleX(0.9);-webkit-text-stroke:0.2px currentColor">71</div><div class="r" style="left:258px;top:850.3px;width:3px;height:34px;background:#c9c9c9;"></div><div class="t" style="left:267px;top:852.42px;font-size:12.8px;color:#8c8c8c;font-weight:400;transform:scaleX(0.7);">OX</div><div class="t" style="left:267px;top:868.38px;font-size:15.2px;color:#1a1a1a;font-weight:400;transform:scaleX(0.9);-webkit-text-stroke:0.2px currentColor">5</div><div class="r" style="left:304px;top:850.3px;width:3px;height:34px;background:#c9c9c9;"></div><div class="t" style="left:313px;top:852.42px;font-size:12.8px;color:#8c8c8c;font-weight:400;transform:scaleX(0.7);">SW</div><div class="t" style="left:313px;top:868.38px;font-size:15.2px;color:#ee2a12;font-weight:400;transform:scaleX(0.9);-webkit-text-stroke:0.2px currentColor">159</div><div class="r" style="left:350px;top:850.3px;width:3px;height:34px;background:#c9c9c9;"></div><div class="t" style="left:359px;top:852.42px;font-size:12.8px;color:#8c8c8c;font-weight:400;transform:scaleX(0.7);">PF</div><div class="t" style="left:359px;top:868.38px;font-size:15.2px;color:#1a1a1a;font-weight:400;transform:scaleX(0.9);-webkit-text-stroke:0.2px currentColor">3</div><div class="r" style="left:396px;top:850.3px;width:3px;height:34px;background:#c9c9c9;"></div><div class="t" style="left:405px;top:852.42px;font-size:12.8px;color:#8c8c8c;font-weight:400;transform:scaleX(0.7);">PD</div><div class="t" style="left:405px;top:868.38px;font-size:15.2px;color:#ee2a12;font-weight:400;transform:scaleX(0.9);-webkit-text-stroke:0.2px currentColor">199</div><div class="r" style="left:442px;top:850.3px;width:3px;height:34px;background:#c9c9c9;"></div><div class="t" style="left:451px;top:852.42px;font-size:12.8px;color:#8c8c8c;font-weight:400;transform:scaleX(0.7);">FO</div><div class="t" style="left:451px;top:868.38px;font-size:15.2px;color:#ee2a12;font-weight:400;transform:scaleX(0.9);-webkit-text-stroke:0.2px currentColor">119</div><div class="r" style="left:29px;top:895px;width:466px;height:63px;border:1px solid #dedede;box-sizing:border-box"></div><div class="t" style="left:38px;top:901.38px;font-size:15px;color:#1f8dcb;font-weight:400;transform:scaleX(0.97);">Gordon, Alan</div><svg class="r" style="left:38px;top:922.13px;" width="26.0" height="26.0" viewBox="0 0 26.0 26.0"><g transform="scale(1.0)"><path d="M2.3 6.5 L11.9 11.0 L11.9 23.3 L3.1 18.9 Z" fill="#7b7b7b"/>
<path d="M14.1 11.0 L23.8 6.5 L22.7 18.6 L14.1 23.3 Z" fill="#7b7b7b"/>
<path d="M3.7 5.0 L13.3 1.6 L15.8 3.4 L5.9 7.0 Z" fill="#7b7b7b"/>
<path d="M9.7 8.0 L19.2 3.7 L22.4 5.5 L11.4 9.9 Z" fill="#7b7b7b"/>
<path d="M5.2 7.6 L8.5 9.2 L8.5 14.1 L6.8 13.4 L5.3 12.6 Z" fill="#fff"/></g></svg><div class="r" style="left:74px;top:918.13px;width:3px;height:34px;background:#c9c9c9;"></div><div class="t" style="left:83px;top:920.25px;font-size:12.8px;color:#8c8c8c;font-weight:400;transform:scaleX(0.7);">RE</div><div class="t" style="left:83px;top:936.21px;font-size:15.2px;color:#ee2a12;font-weight:400;transform:scaleX(0.9);-webkit-text-stroke:0.2px currentColor">38</div><div class="r" style="left:120px;top:918.13px;width:3px;height:34px;background:#c9c9c9;"></div><div class="t" style="left:129px;top:920.25px;font-size:12.8px;color:#8c8c8c;font-weight:400;transform:scaleX(0.7);">EO</div><div class="t" style="left:129px;top:936.21px;font-size:15.2px;color:#ee2a12;font-weight:400;transform:scaleX(0.9);-webkit-text-stroke:0.2px currentColor">47</div><div class="r" style="left:166px;top:918.13px;width:3px;height:34px;background:#c9c9c9;"></div><div class="t" style="left:175px;top:920.25px;font-size:12.8px;color:#8c8c8c;font-weight:400;transform:scaleX(0.7);">TR</div><div class="t" style="left:175px;top:936.21px;font-size:15.2px;color:#1a1a1a;font-weight:400;transform:scaleX(0.9);-webkit-text-stroke:0.2px currentColor">6</div><div class="r" style="left:212px;top:918.13px;width:3px;height:34px;background:#c9c9c9;"></div><div class="t" style="left:221px;top:920.25px;font-size:12.8px;color:#8c8c8c;font-weight:400;transform:scaleX(0.7);">O</div><div class="t" style="left:221px;top:936.21px;font-size:15.2px;color:#ee2a12;font-weight:400;transform:scaleX(0.9);-webkit-text-stroke:0.2px currentColor">34</div><div class="r" style="left:258px;top:918.13px;width:3px;height:34px;background:#c9c9c9;"></div><div class="t" style="left:267px;top:920.25px;font-size:12.8px;color:#8c8c8c;font-weight:400;transform:scaleX(0.7);">OX</div><div class="t" style="left:267px;top:936.21px;font-size:15.2px;color:#1a1a1a;font-weight:400;transform:scaleX(0.9);-webkit-text-stroke:0.2px currentColor">4</div><div class="r" style="left:304px;top:918.13px;width:3px;height:34px;background:#c9c9c9;"></div><div class="t" style="left:313px;top:920.25px;font-size:12.8px;color:#8c8c8c;font-weight:400;transform:scaleX(0.7);">SW</div><div class="t" style="left:313px;top:936.21px;font-size:15.2px;color:#ee2a12;font-weight:400;transform:scaleX(0.9);-webkit-text-stroke:0.2px currentColor">101</div><div class="r" style="left:350px;top:918.13px;width:3px;height:34px;background:#c9c9c9;"></div><div class="t" style="left:359px;top:920.25px;font-size:12.8px;color:#8c8c8c;font-weight:400;transform:scaleX(0.7);">PF</div><div class="t" style="left:359px;top:936.21px;font-size:15.2px;color:#1a1a1a;font-weight:400;transform:scaleX(0.9);-webkit-text-stroke:0.2px currentColor">2</div><div class="r" style="left:396px;top:918.13px;width:3px;height:34px;background:#c9c9c9;"></div><div class="t" style="left:405px;top:920.25px;font-size:12.8px;color:#8c8c8c;font-weight:400;transform:scaleX(0.7);">PD</div><div class="t" style="left:405px;top:936.21px;font-size:15.2px;color:#ee2a12;font-weight:400;transform:scaleX(0.9);-webkit-text-stroke:0.2px currentColor">167</div><div class="r" style="left:442px;top:918.13px;width:3px;height:34px;background:#c9c9c9;"></div><div class="t" style="left:451px;top:920.25px;font-size:12.8px;color:#8c8c8c;font-weight:400;transform:scaleX(0.7);">FO</div><div class="t" style="left:451px;top:936.21px;font-size:15.2px;color:#ee2a12;font-weight:400;transform:scaleX(0.9);-webkit-text-stroke:0.2px currentColor">98</div><div class="r" style="left:499px;top:147px;width:466px;height:64px;border:1px solid #dedede;box-sizing:border-box"></div><div class="t" style="left:508px;top:155.25px;font-size:15px;color:#1f8dcb;font-weight:400;transform:scaleX(0.97);">Balvijay Gunaraj</div><svg class="r" style="left:508px;top:176.0px;" width="26.0" height="26.0" viewBox="0 0 26.0 26.0"><g transform="scale(1.0)"><path d="M2.3 6.5 L11.9 11.0 L11.9 23.3 L3.1 18.9 Z" fill="#7b7b7b"/>
<path d="M14.1 11.0 L23.8 6.5 L22.7 18.6 L14.1 23.3 Z" fill="#7b7b7b"/>
<path d="M3.7 5.0 L13.3 1.6 L15.8 3.4 L5.9 7.0 Z" fill="#7b7b7b"/>
<path d="M9.7 8.0 L19.2 3.7 L22.4 5.5 L11.4 9.9 Z" fill="#7b7b7b"/>
<path d="M5.2 7.6 L8.5 9.2 L8.5 14.1 L6.8 13.4 L5.3 12.6 Z" fill="#fff"/></g></svg><div class="r" style="left:544px;top:172.0px;width:3px;height:34px;background:#c9c9c9;"></div><div class="t" style="left:553px;top:174.12px;font-size:12.8px;color:#8c8c8c;font-weight:400;transform:scaleX(0.7);">RE</div><div class="t" style="left:553px;top:190.08px;font-size:15.2px;color:#1a1a1a;font-weight:400;transform:scaleX(0.9);-webkit-text-stroke:0.2px currentColor">5</div><div class="r" style="left:590px;top:172.0px;width:3px;height:34px;background:#c9c9c9;"></div><div class="t" style="left:599px;top:174.12px;font-size:12.8px;color:#8c8c8c;font-weight:400;transform:scaleX(0.7);">EO</div><div class="t" style="left:599px;top:190.08px;font-size:15.2px;color:#1a1a1a;font-weight:400;transform:scaleX(0.9);-webkit-text-stroke:0.2px currentColor">3</div><div class="r" style="left:636px;top:172.0px;width:3px;height:34px;background:#c9c9c9;"></div><div class="t" style="left:645px;top:174.12px;font-size:12.8px;color:#8c8c8c;font-weight:400;transform:scaleX(0.7);">TR</div><div class="t" style="left:645px;top:190.08px;font-size:15.2px;color:#ee2a12;font-weight:400;transform:scaleX(0.9);-webkit-text-stroke:0.2px currentColor">3</div><div class="r" style="left:682px;top:172.0px;width:3px;height:34px;background:#c9c9c9;"></div><div class="t" style="left:691px;top:174.12px;font-size:12.8px;color:#8c8c8c;font-weight:400;transform:scaleX(0.7);">O</div><div class="t" style="left:691px;top:190.08px;font-size:15.2px;color:#ee2a12;font-weight:400;transform:scaleX(0.9);-webkit-text-stroke:0.2px currentColor">14</div><div class="r" style="left:728px;top:172.0px;width:3px;height:34px;background:#c9c9c9;"></div><div class="t" style="left:737px;top:174.12px;font-size:12.8px;color:#8c8c8c;font-weight:400;transform:scaleX(0.7);">OX</div><div class="t" style="left:737px;top:190.08px;font-size:15.2px;color:#1a1a1a;font-weight:400;transform:scaleX(0.9);-webkit-text-stroke:0.2px currentColor">2</div><div class="r" style="left:774px;top:172.0px;width:3px;height:34px;background:#c9c9c9;"></div><div class="t" style="left:783px;top:174.12px;font-size:12.8px;color:#8c8c8c;font-weight:400;transform:scaleX(0.7);">SW</div><div class="t" style="left:783px;top:190.08px;font-size:15.2px;color:#1a1a1a;font-weight:400;transform:scaleX(0.9);-webkit-text-stroke:0.2px currentColor">16</div><div class="r" style="left:820px;top:172.0px;width:3px;height:34px;background:#c9c9c9;"></div><div class="t" style="left:829px;top:174.12px;font-size:12.8px;color:#8c8c8c;font-weight:400;transform:scaleX(0.7);">PF</div><div class="t" style="left:829px;top:190.08px;font-size:15.2px;color:#1a1a1a;font-weight:400;transform:scaleX(0.9);-webkit-text-stroke:0.2px currentColor">2</div><div class="r" style="left:866px;top:172.0px;width:3px;height:34px;background:#c9c9c9;"></div><div class="t" style="left:875px;top:174.12px;font-size:12.8px;color:#8c8c8c;font-weight:400;transform:scaleX(0.7);">PD</div><div class="t" style="left:875px;top:190.08px;font-size:15.2px;color:#1a1a1a;font-weight:400;transform:scaleX(0.9);-webkit-text-stroke:0.2px currentColor">5</div><div class="r" style="left:912px;top:172.0px;width:3px;height:34px;background:#c9c9c9;"></div><div class="t" style="left:921px;top:174.12px;font-size:12.8px;color:#8c8c8c;font-weight:400;transform:scaleX(0.7);">FO</div><div class="t" style="left:921px;top:190.08px;font-size:15.2px;color:#ee2a12;font-weight:400;transform:scaleX(0.9);-webkit-text-stroke:0.2px currentColor">9</div><div class="r" style="left:499px;top:215px;width:466px;height:64px;border:1px solid #dedede;box-sizing:border-box"></div><div class="t" style="left:508px;top:223.08px;font-size:15px;color:#1f8dcb;font-weight:400;transform:scaleX(0.97);">Rashid Khan</div><svg class="r" style="left:508px;top:243.83px;" width="26.0" height="26.0" viewBox="0 0 26.0 26.0"><g transform="scale(1.0)"><path d="M2.3 6.5 L11.9 11.0 L11.9 23.3 L3.1 18.9 Z" fill="#7b7b7b"/>
<path d="M14.1 11.0 L23.8 6.5 L22.7 18.6 L14.1 23.3 Z" fill="#7b7b7b"/>
<path d="M3.7 5.0 L13.3 1.6 L15.8 3.4 L5.9 7.0 Z" fill="#7b7b7b"/>
<path d="M9.7 8.0 L19.2 3.7 L22.4 5.5 L11.4 9.9 Z" fill="#7b7b7b"/>
<path d="M5.2 7.6 L8.5 9.2 L8.5 14.1 L6.8 13.4 L5.3 12.6 Z" fill="#fff"/></g></svg><div class="r" style="left:544px;top:239.83px;width:3px;height:34px;background:#c9c9c9;"></div><div class="t" style="left:553px;top:241.95px;font-size:12.8px;color:#8c8c8c;font-weight:400;transform:scaleX(0.7);">RE</div><div class="t" style="left:553px;top:257.91px;font-size:15.2px;color:#1a1a1a;font-weight:400;transform:scaleX(0.9);-webkit-text-stroke:0.2px currentColor">1</div><div class="r" style="left:590px;top:239.83px;width:3px;height:34px;background:#c9c9c9;"></div><div class="t" style="left:599px;top:241.95px;font-size:12.8px;color:#8c8c8c;font-weight:400;transform:scaleX(0.7);">EO</div><div class="t" style="left:599px;top:257.91px;font-size:15.2px;color:#ee2a12;font-weight:400;transform:scaleX(0.9);-webkit-text-stroke:0.2px currentColor">26</div><div class="r" style="left:636px;top:239.83px;width:3px;height:34px;background:#c9c9c9;"></div><div class="t" style="left:645px;top:241.95px;font-size:12.8px;color:#8c8c8c;font-weight:400;transform:scaleX(0.7);">TR</div><div class="r" style="left:682px;top:239.83px;width:3px;height:34px;background:#c9c9c9;"></div><div class="t" style="left:691px;top:241.95px;font-size:12.8px;color:#8c8c8c;font-weight:400;transform:scaleX(0.7);">O</div><div class="t" style="left:691px;top:257.91px;font-size:15.2px;color:#1a1a1a;font-weight:400;transform:scaleX(0.9);-webkit-text-stroke:0.2px currentColor">2</div><div class="r" style="left:728px;top:239.83px;width:3px;height:34px;background:#c9c9c9;"></div><div class="t" style="left:737px;top:241.95px;font-size:12.8px;color:#8c8c8c;font-weight:400;transform:scaleX(0.7);">OX</div><div class="r" style="left:774px;top:239.83px;width:3px;height:34px;background:#c9c9c9;"></div><div class="t" style="left:783px;top:241.95px;font-size:12.8px;color:#8c8c8c;font-weight:400;transform:scaleX(0.7);">SW</div><div class="t" style="left:783px;top:257.91px;font-size:15.2px;color:#1a1a1a;font-weight:400;transform:scaleX(0.9);-webkit-text-stroke:0.2px currentColor">1</div><div class="r" style="left:820px;top:239.83px;width:3px;height:34px;background:#c9c9c9;"></div><div class="t" style="left:829px;top:241.95px;font-size:12.8px;color:#8c8c8c;font-weight:400;transform:scaleX(0.7);">PF</div><div class="t" style="left:829px;top:257.91px;font-size:15.2px;color:#1a1a1a;font-weight:400;transform:scaleX(0.9);-webkit-text-stroke:0.2px currentColor">2</div><div class="r" style="left:866px;top:239.83px;width:3px;height:34px;background:#c9c9c9;"></div><div class="t" style="left:875px;top:241.95px;font-size:12.8px;color:#8c8c8c;font-weight:400;transform:scaleX(0.7);">PD</div><div class="t" style="left:875px;top:257.91px;font-size:15.2px;color:#1a1a1a;font-weight:400;transform:scaleX(0.9);-webkit-text-stroke:0.2px currentColor">6</div><div class="r" style="left:912px;top:239.83px;width:3px;height:34px;background:#c9c9c9;"></div><div class="t" style="left:921px;top:241.95px;font-size:12.8px;color:#8c8c8c;font-weight:400;transform:scaleX(0.7);">FO</div><div class="t" style="left:921px;top:257.91px;font-size:15.2px;color:#ee2a12;font-weight:400;transform:scaleX(0.9);-webkit-text-stroke:0.2px currentColor">4</div><div class="r" style="left:499px;top:283px;width:466px;height:64px;border:1px solid #dedede;box-sizing:border-box"></div><div class="t" style="left:508px;top:290.91px;font-size:15px;color:#1f8dcb;font-weight:400;transform:scaleX(0.97);">Michelle Conn</div><svg class="r" style="left:508px;top:311.66px;" width="26.0" height="26.0" viewBox="0 0 26.0 26.0"><g transform="scale(1.0)"><path d="M2.3 6.5 L11.9 11.0 L11.9 23.3 L3.1 18.9 Z" fill="#7b7b7b"/>
<path d="M14.1 11.0 L23.8 6.5 L22.7 18.6 L14.1 23.3 Z" fill="#7b7b7b"/>
<path d="M3.7 5.0 L13.3 1.6 L15.8 3.4 L5.9 7.0 Z" fill="#7b7b7b"/>
<path d="M9.7 8.0 L19.2 3.7 L22.4 5.5 L11.4 9.9 Z" fill="#7b7b7b"/>
<path d="M5.2 7.6 L8.5 9.2 L8.5 14.1 L6.8 13.4 L5.3 12.6 Z" fill="#fff"/></g></svg><div class="r" style="left:544px;top:307.66px;width:3px;height:34px;background:#c9c9c9;"></div><div class="t" style="left:553px;top:309.78px;font-size:12.8px;color:#8c8c8c;font-weight:400;transform:scaleX(0.7);">RE</div><div class="t" style="left:553px;top:325.74px;font-size:15.2px;color:#ee2a12;font-weight:400;transform:scaleX(0.9);-webkit-text-stroke:0.2px currentColor">35</div><div class="r" style="left:590px;top:307.66px;width:3px;height:34px;background:#c9c9c9;"></div><div class="t" style="left:599px;top:309.78px;font-size:12.8px;color:#8c8c8c;font-weight:400;transform:scaleX(0.7);">EO</div><div class="t" style="left:599px;top:325.74px;font-size:15.2px;color:#ee2a12;font-weight:400;transform:scaleX(0.9);-webkit-text-stroke:0.2px currentColor">13</div><div class="r" style="left:636px;top:307.66px;width:3px;height:34px;background:#c9c9c9;"></div><div class="t" style="left:645px;top:309.78px;font-size:12.8px;color:#8c8c8c;font-weight:400;transform:scaleX(0.7);">TR</div><div class="t" style="left:645px;top:325.74px;font-size:15.2px;color:#1a1a1a;font-weight:400;transform:scaleX(0.9);-webkit-text-stroke:0.2px currentColor">1</div><div class="r" style="left:682px;top:307.66px;width:3px;height:34px;background:#c9c9c9;"></div><div class="t" style="left:691px;top:309.78px;font-size:12.8px;color:#8c8c8c;font-weight:400;transform:scaleX(0.7);">O</div><div class="t" style="left:691px;top:325.74px;font-size:15.2px;color:#ee2a12;font-weight:400;transform:scaleX(0.9);-webkit-text-stroke:0.2px currentColor">38</div><div class="r" style="left:728px;top:307.66px;width:3px;height:34px;background:#c9c9c9;"></div><div class="t" style="left:737px;top:309.78px;font-size:12.8px;color:#8c8c8c;font-weight:400;transform:scaleX(0.7);">OX</div><div class="t" style="left:737px;top:325.74px;font-size:15.2px;color:#1a1a1a;font-weight:400;transform:scaleX(0.9);-webkit-text-stroke:0.2px currentColor">5</div><div class="r" style="left:774px;top:307.66px;width:3px;height:34px;background:#c9c9c9;"></div><div class="t" style="left:783px;top:309.78px;font-size:12.8px;color:#8c8c8c;font-weight:400;transform:scaleX(0.7);">SW</div><div class="t" style="left:783px;top:325.74px;font-size:15.2px;color:#ee2a12;font-weight:400;transform:scaleX(0.9);-webkit-text-stroke:0.2px currentColor">49</div><div class="r" style="left:820px;top:307.66px;width:3px;height:34px;background:#c9c9c9;"></div><div class="t" style="left:829px;top:309.78px;font-size:12.8px;color:#8c8c8c;font-weight:400;transform:scaleX(0.7);">PF</div><div class="t" style="left:829px;top:325.74px;font-size:15.2px;color:#ee2a12;font-weight:400;transform:scaleX(0.9);-webkit-text-stroke:0.2px currentColor">21</div><div class="r" style="left:866px;top:307.66px;width:3px;height:34px;background:#c9c9c9;"></div><div class="t" style="left:875px;top:309.78px;font-size:12.8px;color:#8c8c8c;font-weight:400;transform:scaleX(0.7);">PD</div><div class="t" style="left:875px;top:325.74px;font-size:15.2px;color:#ee2a12;font-weight:400;transform:scaleX(0.9);-webkit-text-stroke:0.2px currentColor">50</div><div class="r" style="left:912px;top:307.66px;width:3px;height:34px;background:#c9c9c9;"></div><div class="t" style="left:921px;top:309.78px;font-size:12.8px;color:#8c8c8c;font-weight:400;transform:scaleX(0.7);">FO</div><div class="t" style="left:921px;top:325.74px;font-size:15.2px;color:#ee2a12;font-weight:400;transform:scaleX(0.9);-webkit-text-stroke:0.2px currentColor">53</div><div class="r" style="left:499px;top:351px;width:466px;height:63px;border:1px solid #dedede;box-sizing:border-box"></div><div class="t" style="left:508px;top:358.74px;font-size:15px;color:#1f8dcb;font-weight:400;transform:scaleX(0.97);">Strachan, Iain</div><svg class="r" style="left:508px;top:379.49px;" width="26.0" height="26.0" viewBox="0 0 26.0 26.0"><g transform="scale(1.0)"><path d="M2.3 6.5 L11.9 11.0 L11.9 23.3 L3.1 18.9 Z" fill="#7b7b7b"/>
<path d="M14.1 11.0 L23.8 6.5 L22.7 18.6 L14.1 23.3 Z" fill="#7b7b7b"/>
<path d="M3.7 5.0 L13.3 1.6 L15.8 3.4 L5.9 7.0 Z" fill="#7b7b7b"/>
<path d="M9.7 8.0 L19.2 3.7 L22.4 5.5 L11.4 9.9 Z" fill="#7b7b7b"/>
<path d="M5.2 7.6 L8.5 9.2 L8.5 14.1 L6.8 13.4 L5.3 12.6 Z" fill="#fff"/></g></svg><div class="r" style="left:544px;top:375.49px;width:3px;height:34px;background:#c9c9c9;"></div><div class="t" style="left:553px;top:377.61px;font-size:12.8px;color:#8c8c8c;font-weight:400;transform:scaleX(0.7);">RE</div><div class="t" style="left:553px;top:393.57px;font-size:15.2px;color:#ee2a12;font-weight:400;transform:scaleX(0.9);-webkit-text-stroke:0.2px currentColor">91</div><div class="r" style="left:590px;top:375.49px;width:3px;height:34px;background:#c9c9c9;"></div><div class="t" style="left:599px;top:377.61px;font-size:12.8px;color:#8c8c8c;font-weight:400;transform:scaleX(0.7);">EO</div><div class="t" style="left:599px;top:393.57px;font-size:15.2px;color:#ee2a12;font-weight:400;transform:scaleX(0.9);-webkit-text-stroke:0.2px currentColor">86</div><div class="r" style="left:636px;top:375.49px;width:3px;height:34px;background:#c9c9c9;"></div><div class="t" style="left:645px;top:377.61px;font-size:12.8px;color:#8c8c8c;font-weight:400;transform:scaleX(0.7);">TR</div><div class="t" style="left:645px;top:393.57px;font-size:15.2px;color:#ee2a12;font-weight:400;transform:scaleX(0.9);-webkit-text-stroke:0.2px currentColor">3</div><div class="r" style="left:682px;top:375.49px;width:3px;height:34px;background:#c9c9c9;"></div><div class="t" style="left:691px;top:377.61px;font-size:12.8px;color:#8c8c8c;font-weight:400;transform:scaleX(0.7);">O</div><div class="t" style="left:691px;top:393.57px;font-size:15.2px;color:#ee2a12;font-weight:400;transform:scaleX(0.9);-webkit-text-stroke:0.2px currentColor">68</div><div class="r" style="left:728px;top:375.49px;width:3px;height:34px;background:#c9c9c9;"></div><div class="t" style="left:737px;top:377.61px;font-size:12.8px;color:#8c8c8c;font-weight:400;transform:scaleX(0.7);">OX</div><div class="t" style="left:737px;top:393.57px;font-size:15.2px;color:#1a1a1a;font-weight:400;transform:scaleX(0.9);-webkit-text-stroke:0.2px currentColor">2</div><div class="r" style="left:774px;top:375.49px;width:3px;height:34px;background:#c9c9c9;"></div><div class="t" style="left:783px;top:377.61px;font-size:12.8px;color:#8c8c8c;font-weight:400;transform:scaleX(0.7);">SW</div><div class="t" style="left:783px;top:393.57px;font-size:15.2px;color:#ee2a12;font-weight:400;transform:scaleX(0.9);-webkit-text-stroke:0.2px currentColor">65</div><div class="r" style="left:820px;top:375.49px;width:3px;height:34px;background:#c9c9c9;"></div><div class="t" style="left:829px;top:377.61px;font-size:12.8px;color:#8c8c8c;font-weight:400;transform:scaleX(0.7);">PF</div><div class="t" style="left:829px;top:393.57px;font-size:15.2px;color:#ee2a12;font-weight:400;transform:scaleX(0.9);-webkit-text-stroke:0.2px currentColor">6</div><div class="r" style="left:866px;top:375.49px;width:3px;height:34px;background:#c9c9c9;"></div><div class="t" style="left:875px;top:377.61px;font-size:12.8px;color:#8c8c8c;font-weight:400;transform:scaleX(0.7);">PD</div><div class="t" style="left:875px;top:393.57px;font-size:15.2px;color:#ee2a12;font-weight:400;transform:scaleX(0.9);-webkit-text-stroke:0.2px currentColor">133</div><div class="r" style="left:912px;top:375.49px;width:3px;height:34px;background:#c9c9c9;"></div><div class="t" style="left:921px;top:377.61px;font-size:12.8px;color:#8c8c8c;font-weight:400;transform:scaleX(0.7);">FO</div><div class="t" style="left:921px;top:393.57px;font-size:15.2px;color:#ee2a12;font-weight:400;transform:scaleX(0.9);-webkit-text-stroke:0.2px currentColor">53</div><div class="r" style="left:499px;top:419px;width:466px;height:63px;border:1px solid #dedede;box-sizing:border-box"></div><div class="t" style="left:508px;top:426.57px;font-size:15px;color:#1f8dcb;font-weight:400;transform:scaleX(0.97);">McLellan, Robert</div><svg class="r" style="left:508px;top:447.32px;" width="26.0" height="26.0" viewBox="0 0 26.0 26.0"><g transform="scale(1.0)"><path d="M2.3 6.5 L11.9 11.0 L11.9 23.3 L3.1 18.9 Z" fill="#7b7b7b"/>
<path d="M14.1 11.0 L23.8 6.5 L22.7 18.6 L14.1 23.3 Z" fill="#7b7b7b"/>
<path d="M3.7 5.0 L13.3 1.6 L15.8 3.4 L5.9 7.0 Z" fill="#7b7b7b"/>
<path d="M9.7 8.0 L19.2 3.7 L22.4 5.5 L11.4 9.9 Z" fill="#7b7b7b"/>
<path d="M5.2 7.6 L8.5 9.2 L8.5 14.1 L6.8 13.4 L5.3 12.6 Z" fill="#fff"/></g></svg><div class="r" style="left:544px;top:443.32px;width:3px;height:34px;background:#c9c9c9;"></div><div class="t" style="left:553px;top:445.44px;font-size:12.8px;color:#8c8c8c;font-weight:400;transform:scaleX(0.7);">RE</div><div class="t" style="left:553px;top:461.40px;font-size:15.2px;color:#ee2a12;font-weight:400;transform:scaleX(0.9);-webkit-text-stroke:0.2px currentColor">27</div><div class="r" style="left:590px;top:443.32px;width:3px;height:34px;background:#c9c9c9;"></div><div class="t" style="left:599px;top:445.44px;font-size:12.8px;color:#8c8c8c;font-weight:400;transform:scaleX(0.7);">EO</div><div class="t" style="left:599px;top:461.40px;font-size:15.2px;color:#ee2a12;font-weight:400;transform:scaleX(0.9);-webkit-text-stroke:0.2px currentColor">57</div><div class="r" style="left:636px;top:443.32px;width:3px;height:34px;background:#c9c9c9;"></div><div class="t" style="left:645px;top:445.44px;font-size:12.8px;color:#8c8c8c;font-weight:400;transform:scaleX(0.7);">TR</div><div class="t" style="left:645px;top:461.40px;font-size:15.2px;color:#ee2a12;font-weight:400;transform:scaleX(0.9);-webkit-text-stroke:0.2px currentColor">4</div><div class="r" style="left:682px;top:443.32px;width:3px;height:34px;background:#c9c9c9;"></div><div class="t" style="left:691px;top:445.44px;font-size:12.8px;color:#8c8c8c;font-weight:400;transform:scaleX(0.7);">O</div><div class="t" style="left:691px;top:461.40px;font-size:15.2px;color:#ee2a12;font-weight:400;transform:scaleX(0.9);-webkit-text-stroke:0.2px currentColor">92</div><div class="r" style="left:728px;top:443.32px;width:3px;height:34px;background:#c9c9c9;"></div><div class="t" style="left:737px;top:445.44px;font-size:12.8px;color:#8c8c8c;font-weight:400;transform:scaleX(0.7);">OX</div><div class="t" style="left:737px;top:461.40px;font-size:15.2px;color:#ee2a12;font-weight:400;transform:scaleX(0.9);-webkit-text-stroke:0.2px currentColor">18</div><div class="r" style="left:774px;top:443.32px;width:3px;height:34px;background:#c9c9c9;"></div><div class="t" style="left:783px;top:445.44px;font-size:12.8px;color:#8c8c8c;font-weight:400;transform:scaleX(0.7);">SW</div><div class="t" style="left:783px;top:461.40px;font-size:15.2px;color:#ee2a12;font-weight:400;transform:scaleX(0.9);-webkit-text-stroke:0.2px currentColor">47</div><div class="r" style="left:820px;top:443.32px;width:3px;height:34px;background:#c9c9c9;"></div><div class="t" style="left:829px;top:445.44px;font-size:12.8px;color:#8c8c8c;font-weight:400;transform:scaleX(0.7);">PF</div><div class="t" style="left:829px;top:461.40px;font-size:15.2px;color:#ee2a12;font-weight:400;transform:scaleX(0.9);-webkit-text-stroke:0.2px currentColor">7</div><div class="r" style="left:866px;top:443.32px;width:3px;height:34px;background:#c9c9c9;"></div><div class="t" style="left:875px;top:445.44px;font-size:12.8px;color:#8c8c8c;font-weight:400;transform:scaleX(0.7);">PD</div><div class="t" style="left:875px;top:461.40px;font-size:15.2px;color:#ee2a12;font-weight:400;transform:scaleX(0.9);-webkit-text-stroke:0.2px currentColor">103</div><div class="r" style="left:912px;top:443.32px;width:3px;height:34px;background:#c9c9c9;"></div><div class="t" style="left:921px;top:445.44px;font-size:12.8px;color:#8c8c8c;font-weight:400;transform:scaleX(0.7);">FO</div><div class="t" style="left:921px;top:461.40px;font-size:15.2px;color:#ee2a12;font-weight:400;transform:scaleX(0.9);-webkit-text-stroke:0.2px currentColor">45</div><div class="r" style="left:499px;top:487px;width:466px;height:63px;border:1px solid #dedede;box-sizing:border-box"></div><div class="t" style="left:508px;top:494.40px;font-size:15px;color:#1f8dcb;font-weight:400;transform:scaleX(0.97);">Hamilton, Andrew</div><svg class="r" style="left:508px;top:515.15px;" width="26.0" height="26.0" viewBox="0 0 26.0 26.0"><g transform="scale(1.0)"><path d="M2.3 6.5 L11.9 11.0 L11.9 23.3 L3.1 18.9 Z" fill="#7b7b7b"/>
<path d="M14.1 11.0 L23.8 6.5 L22.7 18.6 L14.1 23.3 Z" fill="#7b7b7b"/>
<path d="M3.7 5.0 L13.3 1.6 L15.8 3.4 L5.9 7.0 Z" fill="#7b7b7b"/>
<path d="M9.7 8.0 L19.2 3.7 L22.4 5.5 L11.4 9.9 Z" fill="#7b7b7b"/>
<path d="M5.2 7.6 L8.5 9.2 L8.5 14.1 L6.8 13.4 L5.3 12.6 Z" fill="#fff"/></g></svg><div class="r" style="left:544px;top:511.15px;width:3px;height:34px;background:#c9c9c9;"></div><div class="t" style="left:553px;top:513.27px;font-size:12.8px;color:#8c8c8c;font-weight:400;transform:scaleX(0.7);">RE</div><div class="t" style="left:553px;top:529.23px;font-size:15.2px;color:#ee2a12;font-weight:400;transform:scaleX(0.9);-webkit-text-stroke:0.2px currentColor">118</div><div class="r" style="left:590px;top:511.15px;width:3px;height:34px;background:#c9c9c9;"></div><div class="t" style="left:599px;top:513.27px;font-size:12.8px;color:#8c8c8c;font-weight:400;transform:scaleX(0.7);">EO</div><div class="t" style="left:599px;top:529.23px;font-size:15.2px;color:#ee2a12;font-weight:400;transform:scaleX(0.9);-webkit-text-stroke:0.2px currentColor">30</div><div class="r" style="left:636px;top:511.15px;width:3px;height:34px;background:#c9c9c9;"></div><div class="t" style="left:645px;top:513.27px;font-size:12.8px;color:#8c8c8c;font-weight:400;transform:scaleX(0.7);">TR</div><div class="t" style="left:645px;top:529.23px;font-size:15.2px;color:#1a1a1a;font-weight:400;transform:scaleX(0.9);-webkit-text-stroke:0.2px currentColor">11</div><div class="r" style="left:682px;top:511.15px;width:3px;height:34px;background:#c9c9c9;"></div><div class="t" style="left:691px;top:513.27px;font-size:12.8px;color:#8c8c8c;font-weight:400;transform:scaleX(0.7);">O</div><div class="t" style="left:691px;top:529.23px;font-size:15.2px;color:#ee2a12;font-weight:400;transform:scaleX(0.9);-webkit-text-stroke:0.2px currentColor">78</div><div class="r" style="left:728px;top:511.15px;width:3px;height:34px;background:#c9c9c9;"></div><div class="t" style="left:737px;top:513.27px;font-size:12.8px;color:#8c8c8c;font-weight:400;transform:scaleX(0.7);">OX</div><div class="t" style="left:737px;top:529.23px;font-size:15.2px;color:#ee2a12;font-weight:400;transform:scaleX(0.9);-webkit-text-stroke:0.2px currentColor">25</div><div class="r" style="left:774px;top:511.15px;width:3px;height:34px;background:#c9c9c9;"></div><div class="t" style="left:783px;top:513.27px;font-size:12.8px;color:#8c8c8c;font-weight:400;transform:scaleX(0.7);">SW</div><div class="t" style="left:783px;top:529.23px;font-size:15.2px;color:#ee2a12;font-weight:400;transform:scaleX(0.9);-webkit-text-stroke:0.2px currentColor">46</div><div class="r" style="left:820px;top:511.15px;width:3px;height:34px;background:#c9c9c9;"></div><div class="t" style="left:829px;top:513.27px;font-size:12.8px;color:#8c8c8c;font-weight:400;transform:scaleX(0.7);">PF</div><div class="t" style="left:829px;top:529.23px;font-size:15.2px;color:#1a1a1a;font-weight:400;transform:scaleX(0.9);-webkit-text-stroke:0.2px currentColor">11</div><div class="r" style="left:866px;top:511.15px;width:3px;height:34px;background:#c9c9c9;"></div><div class="t" style="left:875px;top:513.27px;font-size:12.8px;color:#8c8c8c;font-weight:400;transform:scaleX(0.7);">PD</div><div class="t" style="left:875px;top:529.23px;font-size:15.2px;color:#ee2a12;font-weight:400;transform:scaleX(0.9);-webkit-text-stroke:0.2px currentColor">72</div><div class="r" style="left:912px;top:511.15px;width:3px;height:34px;background:#c9c9c9;"></div><div class="t" style="left:921px;top:513.27px;font-size:12.8px;color:#8c8c8c;font-weight:400;transform:scaleX(0.7);">FO</div><div class="t" style="left:921px;top:529.23px;font-size:15.2px;color:#ee2a12;font-weight:400;transform:scaleX(0.9);-webkit-text-stroke:0.2px currentColor">16</div><div class="r" style="left:499px;top:555px;width:466px;height:63px;border:1px solid #dedede;box-sizing:border-box"></div><div class="t" style="left:508px;top:562.23px;font-size:15px;color:#1f8dcb;font-weight:400;transform:scaleX(0.97);">Scott, Alison</div><svg class="r" style="left:508px;top:582.98px;" width="26.0" height="26.0" viewBox="0 0 26.0 26.0"><g transform="scale(1.0)"><path d="M2.3 6.5 L11.9 11.0 L11.9 23.3 L3.1 18.9 Z" fill="#7b7b7b"/>
<path d="M14.1 11.0 L23.8 6.5 L22.7 18.6 L14.1 23.3 Z" fill="#7b7b7b"/>
<path d="M3.7 5.0 L13.3 1.6 L15.8 3.4 L5.9 7.0 Z" fill="#7b7b7b"/>
<path d="M9.7 8.0 L19.2 3.7 L22.4 5.5 L11.4 9.9 Z" fill="#7b7b7b"/>
<path d="M5.2 7.6 L8.5 9.2 L8.5 14.1 L6.8 13.4 L5.3 12.6 Z" fill="#fff"/></g></svg><div class="r" style="left:544px;top:578.98px;width:3px;height:34px;background:#c9c9c9;"></div><div class="t" style="left:553px;top:581.10px;font-size:12.8px;color:#8c8c8c;font-weight:400;transform:scaleX(0.7);">RE</div><div class="t" style="left:553px;top:597.06px;font-size:15.2px;color:#ee2a12;font-weight:400;transform:scaleX(0.9);-webkit-text-stroke:0.2px currentColor">32</div><div class="r" style="left:590px;top:578.98px;width:3px;height:34px;background:#c9c9c9;"></div><div class="t" style="left:599px;top:581.10px;font-size:12.8px;color:#8c8c8c;font-weight:400;transform:scaleX(0.7);">EO</div><div class="t" style="left:599px;top:597.06px;font-size:15.2px;color:#ee2a12;font-weight:400;transform:scaleX(0.9);-webkit-text-stroke:0.2px currentColor">23</div><div class="r" style="left:636px;top:578.98px;width:3px;height:34px;background:#c9c9c9;"></div><div class="t" style="left:645px;top:581.10px;font-size:12.8px;color:#8c8c8c;font-weight:400;transform:scaleX(0.7);">TR</div><div class="t" style="left:645px;top:597.06px;font-size:15.2px;color:#1a1a1a;font-weight:400;transform:scaleX(0.9);-webkit-text-stroke:0.2px currentColor">3</div><div class="r" style="left:682px;top:578.98px;width:3px;height:34px;background:#c9c9c9;"></div><div class="t" style="left:691px;top:581.10px;font-size:12.8px;color:#8c8c8c;font-weight:400;transform:scaleX(0.7);">O</div><div class="t" style="left:691px;top:597.06px;font-size:15.2px;color:#ee2a12;font-weight:400;transform:scaleX(0.9);-webkit-text-stroke:0.2px currentColor">59</div><div class="r" style="left:728px;top:578.98px;width:3px;height:34px;background:#c9c9c9;"></div><div class="t" style="left:737px;top:581.10px;font-size:12.8px;color:#8c8c8c;font-weight:400;transform:scaleX(0.7);">OX</div><div class="t" style="left:737px;top:597.06px;font-size:15.2px;color:#1a1a1a;font-weight:400;transform:scaleX(0.9);-webkit-text-stroke:0.2px currentColor">6</div><div class="r" style="left:774px;top:578.98px;width:3px;height:34px;background:#c9c9c9;"></div><div class="t" style="left:783px;top:581.10px;font-size:12.8px;color:#8c8c8c;font-weight:400;transform:scaleX(0.7);">SW</div><div class="t" style="left:783px;top:597.06px;font-size:15.2px;color:#ee2a12;font-weight:400;transform:scaleX(0.9);-webkit-text-stroke:0.2px currentColor">43</div><div class="r" style="left:820px;top:578.98px;width:3px;height:34px;background:#c9c9c9;"></div><div class="t" style="left:829px;top:581.10px;font-size:12.8px;color:#8c8c8c;font-weight:400;transform:scaleX(0.7);">PF</div><div class="t" style="left:829px;top:597.06px;font-size:15.2px;color:#1a1a1a;font-weight:400;transform:scaleX(0.9);-webkit-text-stroke:0.2px currentColor">1</div><div class="r" style="left:866px;top:578.98px;width:3px;height:34px;background:#c9c9c9;"></div><div class="t" style="left:875px;top:581.10px;font-size:12.8px;color:#8c8c8c;font-weight:400;transform:scaleX(0.7);">PD</div><div class="t" style="left:875px;top:597.06px;font-size:15.2px;color:#1a1a1a;font-weight:400;transform:scaleX(0.9);-webkit-text-stroke:0.2px currentColor">10</div><div class="r" style="left:912px;top:578.98px;width:3px;height:34px;background:#c9c9c9;"></div><div class="t" style="left:921px;top:581.10px;font-size:12.8px;color:#8c8c8c;font-weight:400;transform:scaleX(0.7);">FO</div><div class="t" style="left:921px;top:597.06px;font-size:15.2px;color:#ee2a12;font-weight:400;transform:scaleX(0.9);-webkit-text-stroke:0.2px currentColor">13</div><div class="r" style="left:499px;top:623px;width:466px;height:63px;border:1px solid #dedede;box-sizing:border-box"></div><div class="t" style="left:508px;top:630.06px;font-size:15px;color:#1f8dcb;font-weight:400;transform:scaleX(0.97);">Forbes, Lynsey</div><svg class="r" style="left:508px;top:650.81px;" width="26.0" height="26.0" viewBox="0 0 26.0 26.0"><g transform="scale(1.0)"><path d="M2.3 6.5 L11.9 11.0 L11.9 23.3 L3.1 18.9 Z" fill="#7b7b7b"/>
<path d="M14.1 11.0 L23.8 6.5 L22.7 18.6 L14.1 23.3 Z" fill="#7b7b7b"/>
<path d="M3.7 5.0 L13.3 1.6 L15.8 3.4 L5.9 7.0 Z" fill="#7b7b7b"/>
<path d="M9.7 8.0 L19.2 3.7 L22.4 5.5 L11.4 9.9 Z" fill="#7b7b7b"/>
<path d="M5.2 7.6 L8.5 9.2 L8.5 14.1 L6.8 13.4 L5.3 12.6 Z" fill="#fff"/></g></svg><div class="r" style="left:544px;top:646.81px;width:3px;height:34px;background:#c9c9c9;"></div><div class="t" style="left:553px;top:648.93px;font-size:12.8px;color:#8c8c8c;font-weight:400;transform:scaleX(0.7);">RE</div><div class="t" style="left:553px;top:664.89px;font-size:15.2px;color:#ee2a12;font-weight:400;transform:scaleX(0.9);-webkit-text-stroke:0.2px currentColor">7</div><div class="r" style="left:590px;top:646.81px;width:3px;height:34px;background:#c9c9c9;"></div><div class="t" style="left:599px;top:648.93px;font-size:12.8px;color:#8c8c8c;font-weight:400;transform:scaleX(0.7);">EO</div><div class="t" style="left:599px;top:664.89px;font-size:15.2px;color:#ee2a12;font-weight:400;transform:scaleX(0.9);-webkit-text-stroke:0.2px currentColor">12</div><div class="r" style="left:636px;top:646.81px;width:3px;height:34px;background:#c9c9c9;"></div><div class="t" style="left:645px;top:648.93px;font-size:12.8px;color:#8c8c8c;font-weight:400;transform:scaleX(0.7);">TR</div><div class="r" style="left:682px;top:646.81px;width:3px;height:34px;background:#c9c9c9;"></div><div class="t" style="left:691px;top:648.93px;font-size:12.8px;color:#8c8c8c;font-weight:400;transform:scaleX(0.7);">O</div><div class="t" style="left:691px;top:664.89px;font-size:15.2px;color:#1a1a1a;font-weight:400;transform:scaleX(0.9);-webkit-text-stroke:0.2px currentColor">12</div><div class="r" style="left:728px;top:646.81px;width:3px;height:34px;background:#c9c9c9;"></div><div class="t" style="left:737px;top:648.93px;font-size:12.8px;color:#8c8c8c;font-weight:400;transform:scaleX(0.7);">OX</div><div class="r" style="left:774px;top:646.81px;width:3px;height:34px;background:#c9c9c9;"></div><div class="t" style="left:783px;top:648.93px;font-size:12.8px;color:#8c8c8c;font-weight:400;transform:scaleX(0.7);">SW</div><div class="t" style="left:783px;top:664.89px;font-size:15.2px;color:#ee2a12;font-weight:400;transform:scaleX(0.9);-webkit-text-stroke:0.2px currentColor">54</div><div class="r" style="left:820px;top:646.81px;width:3px;height:34px;background:#c9c9c9;"></div><div class="t" style="left:829px;top:648.93px;font-size:12.8px;color:#8c8c8c;font-weight:400;transform:scaleX(0.7);">PF</div><div class="r" style="left:866px;top:646.81px;width:3px;height:34px;background:#c9c9c9;"></div><div class="t" style="left:875px;top:648.93px;font-size:12.8px;color:#8c8c8c;font-weight:400;transform:scaleX(0.7);">PD</div><div class="r" style="left:912px;top:646.81px;width:3px;height:34px;background:#c9c9c9;"></div><div class="t" style="left:921px;top:648.93px;font-size:12.8px;color:#8c8c8c;font-weight:400;transform:scaleX(0.7);">FO</div><div class="t" style="left:921px;top:664.89px;font-size:15.2px;color:#ee2a12;font-weight:400;transform:scaleX(0.9);-webkit-text-stroke:0.2px currentColor">20</div><div class="r" style="left:499px;top:691px;width:466px;height:63px;border:1px solid #dedede;box-sizing:border-box"></div><div class="t" style="left:508px;top:697.89px;font-size:15px;color:#1f8dcb;font-weight:400;transform:scaleX(0.97);">Rahul Gaonkar</div><svg class="r" style="left:508px;top:718.64px;" width="26.0" height="26.0" viewBox="0 0 26.0 26.0"><g transform="scale(1.0)"><path d="M2.3 6.5 L11.9 11.0 L11.9 23.3 L3.1 18.9 Z" fill="#7b7b7b"/>
<path d="M14.1 11.0 L23.8 6.5 L22.7 18.6 L14.1 23.3 Z" fill="#7b7b7b"/>
<path d="M3.7 5.0 L13.3 1.6 L15.8 3.4 L5.9 7.0 Z" fill="#7b7b7b"/>
<path d="M9.7 8.0 L19.2 3.7 L22.4 5.5 L11.4 9.9 Z" fill="#7b7b7b"/>
<path d="M5.2 7.6 L8.5 9.2 L8.5 14.1 L6.8 13.4 L5.3 12.6 Z" fill="#fff"/></g></svg><div class="r" style="left:544px;top:714.64px;width:3px;height:34px;background:#c9c9c9;"></div><div class="t" style="left:553px;top:716.76px;font-size:12.8px;color:#8c8c8c;font-weight:400;transform:scaleX(0.7);">RE</div><div class="t" style="left:553px;top:732.72px;font-size:15.2px;color:#1a1a1a;font-weight:400;transform:scaleX(0.9);-webkit-text-stroke:0.2px currentColor">2</div><div class="r" style="left:590px;top:714.64px;width:3px;height:34px;background:#c9c9c9;"></div><div class="t" style="left:599px;top:716.76px;font-size:12.8px;color:#8c8c8c;font-weight:400;transform:scaleX(0.7);">EO</div><div class="r" style="left:636px;top:714.64px;width:3px;height:34px;background:#c9c9c9;"></div><div class="t" style="left:645px;top:716.76px;font-size:12.8px;color:#8c8c8c;font-weight:400;transform:scaleX(0.7);">TR</div><div class="t" style="left:645px;top:732.72px;font-size:15.2px;color:#1a1a1a;font-weight:400;transform:scaleX(0.9);-webkit-text-stroke:0.2px currentColor">1</div><div class="r" style="left:682px;top:714.64px;width:3px;height:34px;background:#c9c9c9;"></div><div class="t" style="left:691px;top:716.76px;font-size:12.8px;color:#8c8c8c;font-weight:400;transform:scaleX(0.7);">O</div><div class="t" style="left:691px;top:732.72px;font-size:15.2px;color:#1a1a1a;font-weight:400;transform:scaleX(0.9);-webkit-text-stroke:0.2px currentColor">6</div><div class="r" style="left:728px;top:714.64px;width:3px;height:34px;background:#c9c9c9;"></div><div class="t" style="left:737px;top:716.76px;font-size:12.8px;color:#8c8c8c;font-weight:400;transform:scaleX(0.7);">OX</div><div class="r" style="left:774px;top:714.64px;width:3px;height:34px;background:#c9c9c9;"></div><div class="t" style="left:783px;top:716.76px;font-size:12.8px;color:#8c8c8c;font-weight:400;transform:scaleX(0.7);">SW</div><div class="t" style="left:783px;top:732.72px;font-size:15.2px;color:#1a1a1a;font-weight:400;transform:scaleX(0.9);-webkit-text-stroke:0.2px currentColor">1</div><div class="r" style="left:820px;top:714.64px;width:3px;height:34px;background:#c9c9c9;"></div><div class="t" style="left:829px;top:716.76px;font-size:12.8px;color:#8c8c8c;font-weight:400;transform:scaleX(0.7);">PF</div><div class="r" style="left:866px;top:714.64px;width:3px;height:34px;background:#c9c9c9;"></div><div class="t" style="left:875px;top:716.76px;font-size:12.8px;color:#8c8c8c;font-weight:400;transform:scaleX(0.7);">PD</div><div class="t" style="left:875px;top:732.72px;font-size:15.2px;color:#ee2a12;font-weight:400;transform:scaleX(0.9);-webkit-text-stroke:0.2px currentColor">9</div><div class="r" style="left:912px;top:714.64px;width:3px;height:34px;background:#c9c9c9;"></div><div class="t" style="left:921px;top:716.76px;font-size:12.8px;color:#8c8c8c;font-weight:400;transform:scaleX(0.7);">FO</div><div class="t" style="left:921px;top:732.72px;font-size:15.2px;color:#ee2a12;font-weight:400;transform:scaleX(0.9);-webkit-text-stroke:0.2px currentColor">19</div><div class="r" style="left:499px;top:759px;width:466px;height:63px;border:1px solid #dedede;box-sizing:border-box"></div><div class="t" style="left:508px;top:765.72px;font-size:15px;color:#1f8dcb;font-weight:400;transform:scaleX(0.97);">Atul Ghaware</div><svg class="r" style="left:508px;top:786.47px;" width="26.0" height="26.0" viewBox="0 0 26.0 26.0"><g transform="scale(1.0)"><path d="M2.3 6.5 L11.9 11.0 L11.9 23.3 L3.1 18.9 Z" fill="#7b7b7b"/>
<path d="M14.1 11.0 L23.8 6.5 L22.7 18.6 L14.1 23.3 Z" fill="#7b7b7b"/>
<path d="M3.7 5.0 L13.3 1.6 L15.8 3.4 L5.9 7.0 Z" fill="#7b7b7b"/>
<path d="M9.7 8.0 L19.2 3.7 L22.4 5.5 L11.4 9.9 Z" fill="#7b7b7b"/>
<path d="M5.2 7.6 L8.5 9.2 L8.5 14.1 L6.8 13.4 L5.3 12.6 Z" fill="#fff"/></g></svg><div class="r" style="left:544px;top:782.47px;width:3px;height:34px;background:#c9c9c9;"></div><div class="t" style="left:553px;top:784.59px;font-size:12.8px;color:#8c8c8c;font-weight:400;transform:scaleX(0.7);">RE</div><div class="t" style="left:553px;top:800.55px;font-size:15.2px;color:#ee2a12;font-weight:400;transform:scaleX(0.9);-webkit-text-stroke:0.2px currentColor">30</div><div class="r" style="left:590px;top:782.47px;width:3px;height:34px;background:#c9c9c9;"></div><div class="t" style="left:599px;top:784.59px;font-size:12.8px;color:#8c8c8c;font-weight:400;transform:scaleX(0.7);">EO</div><div class="t" style="left:599px;top:800.55px;font-size:15.2px;color:#ee2a12;font-weight:400;transform:scaleX(0.9);-webkit-text-stroke:0.2px currentColor">8</div><div class="r" style="left:636px;top:782.47px;width:3px;height:34px;background:#c9c9c9;"></div><div class="t" style="left:645px;top:784.59px;font-size:12.8px;color:#8c8c8c;font-weight:400;transform:scaleX(0.7);">TR</div><div class="t" style="left:645px;top:800.55px;font-size:15.2px;color:#1a1a1a;font-weight:400;transform:scaleX(0.9);-webkit-text-stroke:0.2px currentColor">1</div><div class="r" style="left:682px;top:782.47px;width:3px;height:34px;background:#c9c9c9;"></div><div class="t" style="left:691px;top:784.59px;font-size:12.8px;color:#8c8c8c;font-weight:400;transform:scaleX(0.7);">O</div><div class="t" style="left:691px;top:800.55px;font-size:15.2px;color:#ee2a12;font-weight:400;transform:scaleX(0.9);-webkit-text-stroke:0.2px currentColor">66</div><div class="r" style="left:728px;top:782.47px;width:3px;height:34px;background:#c9c9c9;"></div><div class="t" style="left:737px;top:784.59px;font-size:12.8px;color:#8c8c8c;font-weight:400;transform:scaleX(0.7);">OX</div><div class="r" style="left:774px;top:782.47px;width:3px;height:34px;background:#c9c9c9;"></div><div class="t" style="left:783px;top:784.59px;font-size:12.8px;color:#8c8c8c;font-weight:400;transform:scaleX(0.7);">SW</div><div class="t" style="left:783px;top:800.55px;font-size:15.2px;color:#ee2a12;font-weight:400;transform:scaleX(0.9);-webkit-text-stroke:0.2px currentColor">35</div><div class="r" style="left:820px;top:782.47px;width:3px;height:34px;background:#c9c9c9;"></div><div class="t" style="left:829px;top:784.59px;font-size:12.8px;color:#8c8c8c;font-weight:400;transform:scaleX(0.7);">PF</div><div class="r" style="left:866px;top:782.47px;width:3px;height:34px;background:#c9c9c9;"></div><div class="t" style="left:875px;top:784.59px;font-size:12.8px;color:#8c8c8c;font-weight:400;transform:scaleX(0.7);">PD</div><div class="r" style="left:912px;top:782.47px;width:3px;height:34px;background:#c9c9c9;"></div><div class="t" style="left:921px;top:784.59px;font-size:12.8px;color:#8c8c8c;font-weight:400;transform:scaleX(0.7);">FO</div><div class="t" style="left:921px;top:800.55px;font-size:15.2px;color:#ee2a12;font-weight:400;transform:scaleX(0.9);-webkit-text-stroke:0.2px currentColor">221</div><div class="r" style="left:1262px;top:105px;width:406px;height:218px;background:#fff;"></div><div class="t" style="left:1270.5px;top:119.89px;font-size:14.25px;color:#777;font-weight:400;">Orders In Progress:</div><div class="t" style="left:1402px;top:120.36px;font-size:13.7px;color:#222;font-weight:400;">All Buyers</div><svg class="r" style="left:1471px;top:121px;" width="12" height="8" viewBox="0 0 12 8"><path d="M1.5 1.5 L6 6 L10.5 1.5" stroke="#555" stroke-width="1.3" fill="none"/></svg><svg class="r" style="left:1614px;top:118px;" width="17" height="17" viewBox="0 0 17 17"><path d="M3.4 8 A5.7 5.7 0 1 1 6.25 12.94" stroke="#757575" stroke-width="1.9" fill="none"/><path d="M0.3 6.5 L6.7 6.5 L3.4 11.9 Z" fill="#757575"/></svg><svg class="r" style="left:1641px;top:117px;" width="18" height="18" viewBox="0 0 18 18"><path d="M11.2 4.0 H2.1 V15.9 H13.8 V6.8" stroke="#757575" stroke-width="1.8" fill="none"/><path d="M6.6 10.7 L14.3 3.0" stroke="#757575" stroke-width="2.3"/><path d="M11.9 1.2 H16.8 V5.8 Z" fill="#757575"/></svg><div class="r" style="left:1270px;top:147px;width:390px;height:166px;background:#fff;border:1px solid #f6f6f6;box-sizing:border-box"></div><div class="t" style="left:1270.5px;top:150.52px;font-size:8.8px;color:#111;font-weight:700;">All</div><div class="t" style="left:1270.5px;top:196.84px;font-size:9.6px;color:#111;font-weight:700;">Urgent</div><svg class="r" style="left:1270px;top:164.2px;" width="22.88" height="22.88" viewBox="0 0 22.88 22.88"><g transform="scale(0.88)"><path d="M2.3 6.5 L11.9 11.0 L11.9 23.3 L3.1 18.9 Z" fill="#7b7b7b"/>
<path d="M14.1 11.0 L23.8 6.5 L22.7 18.6 L14.1 23.3 Z" fill="#7b7b7b"/>
<path d="M3.7 5.0 L13.3 1.6 L15.8 3.4 L5.9 7.0 Z" fill="#7b7b7b"/>
<path d="M9.7 8.0 L19.2 3.7 L22.4 5.5 L11.4 9.9 Z" fill="#7b7b7b"/>
<path d="M5.2 7.6 L8.5 9.2 L8.5 14.1 L6.8 13.4 L5.3 12.6 Z" fill="#fff"/></g></svg><div class="r" style="left:1302px;top:161px;width:2.2px;height:30px;background:#c9c9c9;"></div><div class="t" style="left:1309.5px;top:162.76px;font-size:10.4px;color:#8c8c8c;font-weight:400;transform:scaleX(0.76);">EP</div><div class="t" style="left:1309.5px;top:177.69px;font-size:12.6px;color:#ee2a12;font-weight:400;transform:scaleX(0.9);-webkit-text-stroke:0.15px currentColor">1105</div><div class="r" style="left:1342px;top:161px;width:2.2px;height:30px;background:#c9c9c9;"></div><div class="t" style="left:1349.5px;top:162.76px;font-size:10.4px;color:#8c8c8c;font-weight:400;transform:scaleX(0.76);">TA</div><div class="t" style="left:1349.5px;top:177.69px;font-size:12.6px;color:#ee2a12;font-weight:400;transform:scaleX(0.9);-webkit-text-stroke:0.15px currentColor">3499</div><div class="r" style="left:1382px;top:161px;width:2.2px;height:30px;background:#c9c9c9;"></div><div class="t" style="left:1389.5px;top:162.76px;font-size:10.4px;color:#8c8c8c;font-weight:400;transform:scaleX(0.76);">DA</div><div class="t" style="left:1389.5px;top:177.69px;font-size:12.6px;color:#ee2a12;font-weight:400;transform:scaleX(0.9);-webkit-text-stroke:0.15px currentColor">4014</div><div class="r" style="left:1422px;top:161px;width:2.2px;height:30px;background:#c9c9c9;"></div><div class="t" style="left:1429.5px;top:162.76px;font-size:10.4px;color:#8c8c8c;font-weight:400;transform:scaleX(0.76);">DV</div><div class="t" style="left:1429.5px;top:177.69px;font-size:12.6px;color:#ee2a12;font-weight:400;transform:scaleX(0.9);-webkit-text-stroke:0.15px currentColor">214</div><div class="r" style="left:1462px;top:161px;width:2.2px;height:30px;background:#c9c9c9;"></div><div class="t" style="left:1469.5px;top:162.76px;font-size:10.4px;color:#8c8c8c;font-weight:400;transform:scaleX(0.76);">DW</div><div class="t" style="left:1469.5px;top:177.69px;font-size:12.6px;color:#ee2a12;font-weight:400;transform:scaleX(0.9);-webkit-text-stroke:0.15px currentColor">1997</div><div class="r" style="left:1502px;top:161px;width:2.2px;height:30px;background:#c9c9c9;"></div><div class="t" style="left:1509.5px;top:162.76px;font-size:10.4px;color:#8c8c8c;font-weight:400;transform:scaleX(0.76);">RA</div><div class="t" style="left:1509.5px;top:177.69px;font-size:12.6px;color:#ee2a12;font-weight:400;transform:scaleX(0.9);-webkit-text-stroke:0.15px currentColor">252</div><div class="r" style="left:1542px;top:161px;width:2.2px;height:30px;background:#c9c9c9;"></div><div class="t" style="left:1549.5px;top:162.76px;font-size:10.4px;color:#8c8c8c;font-weight:400;transform:scaleX(0.76);">RT</div><div class="t" style="left:1549.5px;top:177.69px;font-size:12.6px;color:#ee2a12;font-weight:400;transform:scaleX(0.9);-webkit-text-stroke:0.15px currentColor">4480</div><div class="r" style="left:1582px;top:161px;width:2.2px;height:30px;background:#c9c9c9;"></div><div class="t" style="left:1589.5px;top:162.76px;font-size:10.4px;color:#8c8c8c;font-weight:400;transform:scaleX(0.76);">OH</div><div class="t" style="left:1589.5px;top:177.69px;font-size:12.6px;color:#ee2a12;font-weight:400;transform:scaleX(0.9);-webkit-text-stroke:0.15px currentColor">565</div><div class="r" style="left:1622px;top:161px;width:2.2px;height:30px;background:#c9c9c9;"></div><div class="t" style="left:1629.5px;top:162.76px;font-size:10.4px;color:#8c8c8c;font-weight:400;transform:scaleX(0.76);">FO</div><div class="t" style="left:1629.5px;top:177.69px;font-size:12.6px;color:#ee2a12;font-weight:400;transform:scaleX(0.9);-webkit-text-stroke:0.15px currentColor">1284</div><svg class="r" style="left:1270px;top:210.2px;" width="22.88" height="22.88" viewBox="0 0 22.88 22.88"><g transform="scale(0.88)"><path d="M2.3 6.5 L11.9 11.0 L11.9 23.3 L3.1 18.9 Z" fill="#7b7b7b"/>
<path d="M14.1 11.0 L23.8 6.5 L22.7 18.6 L14.1 23.3 Z" fill="#7b7b7b"/>
<path d="M3.7 5.0 L13.3 1.6 L15.8 3.4 L5.9 7.0 Z" fill="#7b7b7b"/>
<path d="M9.7 8.0 L19.2 3.7 L22.4 5.5 L11.4 9.9 Z" fill="#7b7b7b"/>
<path d="M5.2 7.6 L8.5 9.2 L8.5 14.1 L6.8 13.4 L5.3 12.6 Z" fill="#fff"/></g></svg><div class="r" style="left:1302px;top:207px;width:2.2px;height:30px;background:#c9c9c9;"></div><div class="t" style="left:1309.5px;top:208.76px;font-size:10.4px;color:#8c8c8c;font-weight:400;transform:scaleX(0.76);">EP</div><div class="t" style="left:1309.5px;top:223.69px;font-size:12.6px;color:#ee2a12;font-weight:400;transform:scaleX(0.9);-webkit-text-stroke:0.15px currentColor">113</div><div class="r" style="left:1342px;top:207px;width:2.2px;height:30px;background:#c9c9c9;"></div><div class="t" style="left:1349.5px;top:208.76px;font-size:10.4px;color:#8c8c8c;font-weight:400;transform:scaleX(0.76);">TA</div><div class="t" style="left:1349.5px;top:223.69px;font-size:12.6px;color:#ee2a12;font-weight:400;transform:scaleX(0.9);-webkit-text-stroke:0.15px currentColor">443</div><div class="r" style="left:1382px;top:207px;width:2.2px;height:30px;background:#c9c9c9;"></div><div class="t" style="left:1389.5px;top:208.76px;font-size:10.4px;color:#8c8c8c;font-weight:400;transform:scaleX(0.76);">DA</div><div class="t" style="left:1389.5px;top:223.69px;font-size:12.6px;color:#ee2a12;font-weight:400;transform:scaleX(0.9);-webkit-text-stroke:0.15px currentColor">294</div><div class="r" style="left:1422px;top:207px;width:2.2px;height:30px;background:#c9c9c9;"></div><div class="t" style="left:1429.5px;top:208.76px;font-size:10.4px;color:#8c8c8c;font-weight:400;transform:scaleX(0.76);">DV</div><div class="t" style="left:1429.5px;top:223.69px;font-size:12.6px;color:#ee2a12;font-weight:400;transform:scaleX(0.9);-webkit-text-stroke:0.15px currentColor">7</div><div class="r" style="left:1462px;top:207px;width:2.2px;height:30px;background:#c9c9c9;"></div><div class="t" style="left:1469.5px;top:208.76px;font-size:10.4px;color:#8c8c8c;font-weight:400;transform:scaleX(0.76);">DW</div><div class="t" style="left:1469.5px;top:223.69px;font-size:12.6px;color:#ee2a12;font-weight:400;transform:scaleX(0.9);-webkit-text-stroke:0.15px currentColor">170</div><div class="r" style="left:1502px;top:207px;width:2.2px;height:30px;background:#c9c9c9;"></div><div class="t" style="left:1509.5px;top:208.76px;font-size:10.4px;color:#8c8c8c;font-weight:400;transform:scaleX(0.76);">RA</div><div class="t" style="left:1509.5px;top:223.69px;font-size:12.6px;color:#ee2a12;font-weight:400;transform:scaleX(0.9);-webkit-text-stroke:0.15px currentColor">27</div><div class="r" style="left:1542px;top:207px;width:2.2px;height:30px;background:#c9c9c9;"></div><div class="t" style="left:1549.5px;top:208.76px;font-size:10.4px;color:#8c8c8c;font-weight:400;transform:scaleX(0.76);">RT</div><div class="t" style="left:1549.5px;top:223.69px;font-size:12.6px;color:#ee2a12;font-weight:400;transform:scaleX(0.9);-webkit-text-stroke:0.15px currentColor">166</div><div class="r" style="left:1582px;top:207px;width:2.2px;height:30px;background:#c9c9c9;"></div><div class="t" style="left:1589.5px;top:208.76px;font-size:10.4px;color:#8c8c8c;font-weight:400;transform:scaleX(0.76);">OH</div><div class="t" style="left:1589.5px;top:223.69px;font-size:12.6px;color:#ee2a12;font-weight:400;transform:scaleX(0.9);-webkit-text-stroke:0.15px currentColor">67</div><div class="r" style="left:1622px;top:207px;width:2.2px;height:30px;background:#c9c9c9;"></div><div class="t" style="left:1629.5px;top:208.76px;font-size:10.4px;color:#8c8c8c;font-weight:400;transform:scaleX(0.76);">FO</div><div class="t" style="left:1629.5px;top:223.69px;font-size:12.6px;color:#ee2a12;font-weight:400;transform:scaleX(0.9);-webkit-text-stroke:0.15px currentColor">714</div><div class="r" style="left:1262px;top:331px;width:406px;height:218px;background:#fff;"></div><div class="t" style="left:1270.5px;top:343.23px;font-size:14.2px;color:#222;font-weight:400;">Tracked Orders (8)</div><svg class="r" style="left:1641.6px;top:340.7px;" width="17" height="17" viewBox="0 0 17 17"><path d="M3.4 8 A5.7 5.7 0 1 1 6.25 12.94" stroke="#757575" stroke-width="1.9" fill="none"/><path d="M0.3 6.5 L6.7 6.5 L3.4 11.9 Z" fill="#757575"/></svg><div class="r" style="left:1368px;top:369px;width:1px;height:155px;background:#dcdcdc;"></div><div class="r" style="left:1588px;top:369px;width:1px;height:155px;background:#dcdcdc;"></div><div class="t" style="left:1279.5px;top:379.49px;font-size:10.6px;color:#222;font-weight:400;transform:scaleX(0.9);">ORDER NUMBER</div><div class="t" style="left:1376.5px;top:379.49px;font-size:10.6px;color:#222;font-weight:400;transform:scaleX(0.9);">ORDER TITLE</div><div class="t" style="left:1597px;top:379.49px;font-size:10.6px;color:#222;font-weight:400;transform:scaleX(0.9);">ORDER ST</div><div class="r" style="left:1271px;top:398px;width:373px;height:1px;background:#dcdcdc;"></div><div class="r" style="left:1271px;top:428px;width:373px;height:1px;background:#dcdcdc;"></div><div class="r" style="left:1271px;top:458px;width:373px;height:1px;background:#dcdcdc;"></div><div class="r" style="left:1271px;top:488px;width:373px;height:1px;background:#dcdcdc;"></div><div class="r" style="left:1271px;top:518px;width:373px;height:1px;background:#dcdcdc;"></div><div class="t" style="left:1279.5px;top:407.63px;font-size:12.2px;color:#2a93cf;font-weight:400;">3486 - 90195</div><div class="t" style="left:1376.5px;top:407.63px;font-size:12.2px;color:#222;font-weight:400;transform:scaleX(0.91);">LUBOILS</div><div class="r" style="left:1630px;top:404.5px;width:17px;height:17px;border-radius:50%;background:#6ab24e"></div><div class="t" style="left:1631.5px;top:409.05px;font-size:9px;color:#fff;font-weight:700;letter-spacing:-0.4px">TA</div><div class="t" style="left:1279.5px;top:437.63px;font-size:12.2px;color:#2a93cf;font-weight:400;">4108 - 90099</div><div class="t" style="left:1376.5px;top:437.63px;font-size:12.2px;color:#222;font-weight:400;transform:scaleX(0.91);">PAINTS</div><div class="r" style="left:1630px;top:434.5px;width:17px;height:17px;border-radius:50%;background:#6ab24e"></div><div class="t" style="left:1631.5px;top:439.05px;font-size:9px;color:#fff;font-weight:700;letter-spacing:-0.4px">SW</div><div class="t" style="left:1279.5px;top:467.63px;font-size:12.2px;color:#2a93cf;font-weight:400;">3832 - 90138</div><div class="t" style="left:1376.5px;top:467.63px;font-size:12.2px;color:#222;font-weight:400;transform:scaleX(1.0);">V Sat Installation Costs</div><div class="r" style="left:1630px;top:464.5px;width:17px;height:17px;border-radius:50%;background:#6ab24e"></div><div class="t" style="left:1631.5px;top:469.05px;font-size:9px;color:#fff;font-weight:700;letter-spacing:-0.4px">RE</div><div class="t" style="left:1279.5px;top:497.63px;font-size:12.2px;color:#2a93cf;font-weight:400;">3784 - 90076</div><div class="t" style="left:1376.5px;top:497.63px;font-size:12.2px;color:#222;font-weight:400;transform:scaleX(1.0);">Rolling order for Fuel oil services</div><div class="r" style="left:1630px;top:494.5px;width:17px;height:17px;border-radius:50%;background:#6ab24e"></div><div class="t" style="left:1631.5px;top:499.05px;font-size:9px;color:#fff;font-weight:700;letter-spacing:-0.4px">RE</div><div class="r" style="left:1644px;top:367px;width:17px;height:157px;background:#d6d6d6;"></div><div class="r" style="left:1644px;top:384px;width:17px;height:65px;background:#b9b9b9;"></div><svg class="r" style="left:1644px;top:367px;" width="17" height="17" viewBox="0 0 17 17"><path d="M4 11 L8.5 6.5 L13 11" stroke="#777" stroke-width="1.1" fill="none"/></svg><svg class="r" style="left:1644px;top:507px;" width="17" height="17" viewBox="0 0 17 17"><path d="M4 6 L8.5 10.5 L13 6" stroke="#777" stroke-width="1.1" fill="none"/></svg><div class="r" style="left:1270px;top:524px;width:374px;height:17px;background:#d6d6d6;"></div><div class="r" style="left:1287px;top:524px;width:312px;height:17px;background:#b9b9b9;"></div><svg class="r" style="left:1270px;top:524px;" width="17" height="17" viewBox="0 0 17 17"><path d="M11 4 L6.5 8.5 L11 13" stroke="#777" stroke-width="1.1" fill="none"/></svg><svg class="r" style="left:1627px;top:524px;" width="17" height="17" viewBox="0 0 17 17"><path d="M6 4 L10.5 8.5 L6 13" stroke="#777" stroke-width="1.1" fill="none"/></svg><div class="r" style="left:1262px;top:557px;width:406px;height:218px;background:#fff;"></div><div class="t" style="left:1270.5px;top:568.67px;font-size:14.5px;color:#222;font-weight:400;">Memos (0)</div><svg class="r" style="left:1613.6px;top:566px;" width="17" height="17" viewBox="0 0 17 17"><path d="M3.4 8 A5.7 5.7 0 1 1 6.25 12.94" stroke="#757575" stroke-width="1.9" fill="none"/><path d="M0.3 6.5 L6.7 6.5 L3.4 11.9 Z" fill="#757575"/></svg><svg class="r" style="left:1640.7px;top:566.1px;" width="18" height="18" viewBox="0 0 18 18"><path d="M11.2 4.0 H2.1 V15.9 H13.8 V6.8" stroke="#757575" stroke-width="1.8" fill="none"/><path d="M6.6 10.7 L14.3 3.0" stroke="#757575" stroke-width="2.3"/><path d="M11.9 1.2 H16.8 V5.8 Z" fill="#757575"/></svg><div class="r" style="left:1262px;top:783px;width:406px;height:218px;background:#fff;"></div><div class="t" style="left:1270.5px;top:797.76px;font-size:14.4px;color:#222;font-weight:400;">Position List:</div><div class="t" style="left:1359.5px;top:799.03px;font-size:12.9px;color:#222;font-weight:400;">AROSA</div><svg class="r" style="left:1411px;top:799px;" width="12" height="8" viewBox="0 0 12 8"><path d="M1.5 1.5 L6 6 L10.5 1.5" stroke="#555" stroke-width="1.3" fill="none"/></svg><svg class="r" style="left:1430px;top:795px;" width="18" height="18" viewBox="0 0 18 18"><circle cx="9" cy="9" r="7.3" stroke="#777" stroke-width="1.1" fill="none"/><rect x="8.4" y="7.5" width="1.2" height="5.5" fill="#777"/><rect x="8.4" y="5" width="1.2" height="1.3" fill="#777"/></svg><div class="r" style="left:1548px;top:791px;width:26px;height:26px;background:#b7dcf0;"></div><svg class="r" style="left:1550px;top:794px;" width="22" height="20" viewBox="0 0 22 20"><path d="M2.5 8.5 L11 3 L19.5 8.5" stroke="#888" stroke-width="1.2" fill="none"/><path d="M4.5 8 V17 M17.5 8 V17" stroke="#888" stroke-width="1.2"/><rect x="7" y="11" width="8" height="6" stroke="#888" stroke-width="1" fill="none"/><path d="M7 13 H15 M7 15 H15" stroke="#888" stroke-width="0.8"/></svg><svg class="r" style="left:1582px;top:795px;" width="18" height="20" viewBox="0 0 18 20"><path d="M9 1.5 C5 1.5 2.5 4.5 2.5 7.8 C2.5 12 9 18.5 9 18.5 C9 18.5 15.5 12 15.5 7.8 C15.5 4.5 13 1.5 9 1.5 Z M9 5.2 A2.6 2.6 0 1 0 9.01 5.2 Z" fill="#777" fill-rule="evenodd"/></svg><svg class="r" style="left:1613.6px;top:795.2px;" width="17" height="17" viewBox="0 0 17 17"><path d="M3.4 8 A5.7 5.7 0 1 1 6.25 12.94" stroke="#757575" stroke-width="1.9" fill="none"/><path d="M0.3 6.5 L6.7 6.5 L3.4 11.9 Z" fill="#757575"/></svg><svg class="r" style="left:1640.7px;top:795.1px;" width="18" height="18" viewBox="0 0 18 18"><path d="M11.2 4.0 H2.1 V15.9 H13.8 V6.8" stroke="#757575" stroke-width="1.8" fill="none"/><path d="M6.6 10.7 L14.3 3.0" stroke="#757575" stroke-width="2.3"/><path d="M11.9 1.2 H16.8 V5.8 Z" fill="#757575"/></svg><svg class="r" style="left:1270px;top:825px" width="390" height="156" viewBox="0 0 390 156">
<rect width="390" height="156" fill="#a9c6f0"/>
<g fill="#f2f1ee" stroke="none">
<path d="M176.8 0 L170 14.2 L166.5 21 L163 31.4 L161.4 41.7 L158.8 50.3 L158.8 60.6 L163 67.5 L170 72.7 L178.6 76.1 L187.2 77.8 L198 76 L215 80 L226 86.4 L233 93.3 L231.3 107 L239.9 117.3 L241.6 131 L240.7 156 L317.2 156 L320.6 134.5 L317.2 117.3 L320.7 103.6 L332.7 89.8 L344.7 77.8 L350.7 65.8 L337.8 64 L327.5 53.7 L344.7 53.7 L362 43.4 L374.8 33 L390 22 L390 0 Z"/>
<path d="M0 65.8 L4.9 65.8 L8.3 67.5 L18.6 69.2 L29 72.7 L35.8 76 L41 83 L49.6 84.7 L56.5 86.4 L59.9 93.3 L66.8 100 L80.5 105.3 L94.3 108.8 L104.6 114 L106.3 119 L101.2 127.7 L97.7 134.6 L94.3 143.2 L93.4 156 L0 156 Z"/>
<path d="M1.4 43 L8 43.6 L10 45 L3 45.5 Z"/>
<path d="M344.7 132.8 L348.2 136 L346.5 141 L341.3 148.3 L335 152 L331 149.5 L333 145 L337.8 141.4 Z"/>
</g>
<g fill="none" stroke="#a9c6f0">
<path d="M300 8 L312 26 L322 42 L328 52" stroke-width="4.5"/>
<path d="M241 0 L286 0 L284 4 L262 5 L244 3 Z" fill="#a9c6f0" stroke="none"/>
<path d="M344 5 L352 9 L362 17 L368 24 L371 20 L366 13 L356 5 Z" fill="#a9c6f0" stroke-width="1"/>
<path d="M296 99 L302 98 L304 105 L297 107 Z" fill="#a9c6f0" stroke="none"/>
<path d="M246 60 L248 62" stroke-width="2"/>
<path d="M290 108 L292 120 L295 132" stroke-width="1.4"/>
</g>
<g fill="none" stroke="#8f8f8f" stroke-width="0.7">
<path d="M277.7 0 L277.7 34 L310.3 34"/>
<path d="M231.3 0 L234.7 28 L248.4 31.4 L274.2 40 L274.2 52 L269 65.8 L276 74.4"/>
<path d="M190 26.2 L215.8 43.4 L221 55.5 L241.6 60.6 L246.7 62.3"/>
<path d="M248.4 62.3 L245 79.5 L236.4 89.8 L239.9 107 L241.6 115.6"/>
<path d="M269 65.8 L286.3 72.7 L300 65.8 L310.3 50.3 L313.8 46.6"/>
<path d="M286.3 72.7 L293.1 93.3 L289.7 107 L293.1 120.8 L286.3 131 L293.1 134.5 L300 146.6 L306.9 151.7"/>
<path d="M310.3 55.5 L303.5 76 L322.4 86.4 L320.7 100 L317.2 107"/>
<path d="M241.6 115.6 L272.5 115.6 L286.3 122.5 L274.2 131 L265.6 131 L269 151.7"/>
<path d="M332 50 L344 48 L358 41 L367 40"/>
<path d="M310 16 L324 23 L355 31 L372 24"/>
<path d="M170 14 L185 12 L196 5 L200 0"/>
<path d="M172 40 L185 22 L196 20 L205 38 L230 28"/>
<path d="M160 62 L175 58 L190 60 L205 58 L215 66 L220 80"/>
<path d="M185 22 L188 55 L200 62"/>
<path d="M205 38 L212 58"/>
<path d="M245 79.5 L265 80 L275 74"/>
<path d="M0 75 L12 78 L10 92 L20 100 L16 112 L28 118 L22 135 L35 150 L30 155"/>
<path d="M28 72 L34 86 L46 90 L52 86"/>
<path d="M10 92 L30 96 L44 100"/>
<path d="M60 140 L80 125 L96 128"/>
<path d="M165 66 L172 64 L178 70"/><path d="M175 58 L180 66 L186 70"/><path d="M196 66 L198 76"/>
<path d="M215 66 L224 62 L232 64 L238 60"/><path d="M224 62 L226 80"/>
<path d="M250 100 L262 98 L272 104 L280 100 L290 100"/><path d="M262 98 L260 115"/>
<path d="M255 131 L262 140 L258 150 L270 156"/><path d="M286 131 L292 145 L288 156"/>
<path d="M303 76 L296 84 L300 92"/><path d="M320 86 L312 92 L318 100"/>
<path d="M200 0 L210 8 L225 12 L231 0"/><path d="M172 40 L168 52"/>
<path d="M2 100 L12 104"/><path d="M40 110 L55 118 L48 135 L62 148"/><path d="M12 128 L22 135"/>
</g>
<path d="M0 17.6 L13.5 9.9 L16 28 L0 23 Z" fill="#a774c6"/>
<path d="M142.5 36.6 L166.5 21 L156.2 47.7 Z" fill="#a774c6"/>
<text x="67.6" y="34.8" font-family="Liberation Sans" font-style="italic" font-size="10.5" letter-spacing="1.3" fill="#4a5aa3">Atlantic</text>
<text x="73.7" y="46.9" font-family="Liberation Sans" font-style="italic" font-size="10.5" letter-spacing="1.3" fill="#4a5aa3">Ocean</text>
<text x="245" y="95.8" font-family="Liberation Sans" font-size="21" fill="#727272" letter-spacing="0.2" transform="translate(245 0) scale(0.96 1) translate(-245 0)">AFRICA</text>
<text x="11" y="152.6" font-family="Liberation Sans" font-size="22" fill="#767676" transform="translate(11 0) scale(0.95 1) translate(-11 0)">SOUTH</text>
<circle cx="194.2" cy="83.7" r="18.8" stroke="#8e3ea2" stroke-width="2" fill="none"/>
<rect x="185.6" y="78" width="40.7" height="21.2" fill="#fff" stroke="#2c93d2" stroke-width="1"/>
<path d="M201.5 99 L206 104 L210.5 99" fill="#fff" stroke="#2c93d2" stroke-width="1"/>
<rect x="201" y="98" width="10" height="1.5" fill="#fff"/>
<g stroke="#2c93d2" stroke-width="1.2" fill="none"><path d="M195.5 83 V93.5 M191 89.5 C191 93.5 200 93.5 200 89.5"/><circle cx="195.5" cy="83" r="0.9"/></g>
<text x="212" y="94" font-family="Liberation Sans" font-size="13" fill="#2c93d2">5</text>
<rect x="285" y="-2" width="41" height="13" fill="#fff" stroke="#2c93d2" stroke-width="1"/>
<path d="M300.5 11 L305 15.5 L309.5 11" fill="#fff" stroke="#2c93d2" stroke-width="1"/>
<rect x="300" y="10" width="10" height="1.5" fill="#fff"/>
<g stroke="#2c93d2" stroke-width="1.2" fill="none"><path d="M296 -1 V6.5 M291.5 3 C291.5 7 300.5 7 300.5 3"/></g>
<path d="M315.5 -1 V8" stroke="#2c93d2" stroke-width="1.6"/>
<path d="M178.6 0 L182.3 3.6 L186 0" fill="none" stroke="#2c93d2" stroke-width="1"/>
<rect x="369.8" y="2" width="18.6" height="17.8" fill="#fff" stroke="#d0d0d0" stroke-width="0.8"/>
<path d="M375 9 L379 13 L383 9 Z" fill="#b0b0b0"/>
</svg><div class="r" style="left:1270px;top:980px;width:390px;height:13px;background:#2598d2;"></div><div class="t" style="left:1291.2px;top:983.21px;font-size:8.7px;color:#fff;font-weight:700;transform:scaleX(0.875);">32&#xb0; 18&#x27; 57.98&quot; N 39&#xb0; 01&#x27; 24.38&quot; W</div>
</body></html>
